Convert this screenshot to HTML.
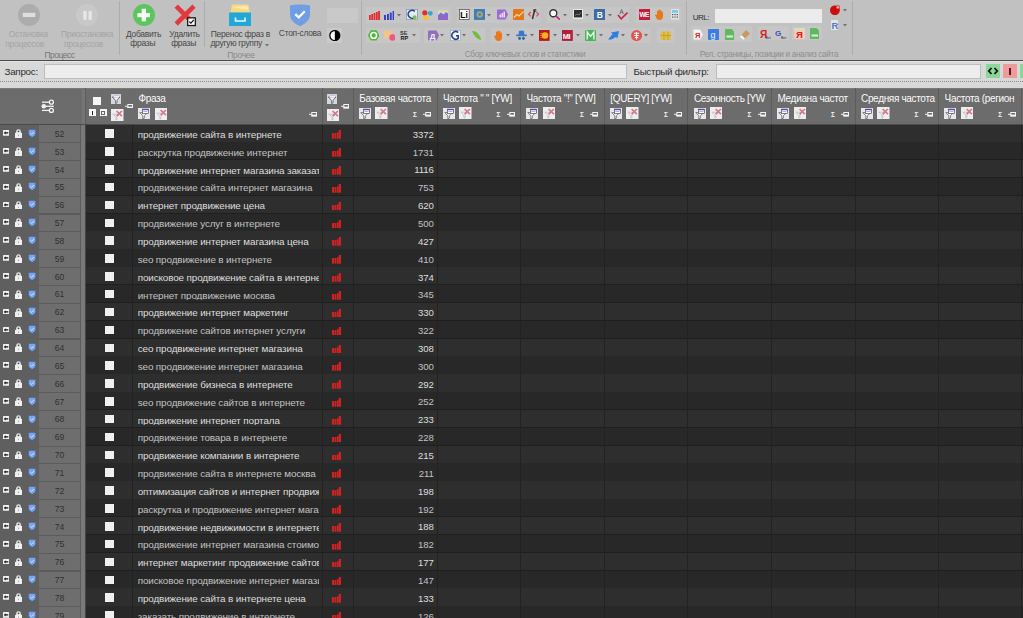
<!DOCTYPE html><html><head><meta charset="utf-8"><style>
*{margin:0;padding:0;box-sizing:border-box}
html,body{width:1023px;height:618px;overflow:hidden;background:#2a2a2a;font-family:"Liberation Sans",sans-serif}
.a{position:absolute}
.t{position:absolute;white-space:nowrap;line-height:1}
#rib{left:0;top:0;width:1023px;height:60px;background:#c1c1c1}
.rl{color:#3e3e3e;font-size:9px;letter-spacing:-0.6px}
.rd{color:#a3a3a3}
.gl{color:#8e8e8e;font-size:9px;letter-spacing:-0.5px}
.sep{position:absolute;width:1px;background:#adadad}
.grp{position:absolute;background:#c8c8c8}
.dd{position:absolute;width:0;height:0;border-left:2.5px solid transparent;border-right:2.5px solid transparent;border-top:3px solid #6a6a6a}
#qb{left:0;top:61px;width:1023px;height:27px;background:#d8d8d8}
.inp{position:absolute;background:#ededed;border:1px solid #bdbdbd}
.hdr{position:absolute;top:88px;height:36.3px;background:#6c6c6c}
.ht{color:#fafafa;font-size:10px;letter-spacing:-0.33px}
.row{position:absolute;left:85.5px;width:938px;height:17.8px}
.ph{font-size:9.9px;letter-spacing:-0.12px}
</style></head><body>
<div id="rib" class="a"></div>
<div class="a" style="left:0;top:59.5px;width:1023px;height:1.5px;background:#4b4b4b"></div>
<svg class="a" style="left:17.6px;top:4.2px" width="22" height="22" viewBox="0 0 22 22"><circle cx="11" cy="11" r="11" fill="#acacac"/><rect x="4.7" y="8.8" width="12.6" height="4.2" fill="#dedede"/></svg>
<svg class="a" style="left:75.5px;top:4.2px" width="22" height="22" viewBox="0 0 22 22"><circle cx="11" cy="11" r="11" fill="#c8c8c8"/><rect x="7.2" y="6.9" width="3.5" height="8.9" fill="#e6e6e6"/><rect x="12.5" y="6.9" width="3.3" height="8.9" fill="#e6e6e6"/></svg>
<div class="t" style="left:-21.60px;width:100px;text-align:center;top:30.20px;font-size:8.5px;color:#a4a4a4;letter-spacing:-0.3px">Остановка</div>
<div class="t" style="left:-25.40px;width:100px;text-align:center;top:39.50px;font-size:8.5px;color:#a4a4a4;letter-spacing:-0.3px">процессов</div>
<div class="t" style="left:37.10px;width:100px;text-align:center;top:30.20px;font-size:8.5px;color:#a4a4a4;letter-spacing:-0.3px">Приостановка</div>
<div class="t" style="left:33.30px;width:100px;text-align:center;top:39.50px;font-size:8.5px;color:#a4a4a4;letter-spacing:-0.3px">процессов</div>
<div class="t" style="left:9.50px;width:100px;text-align:center;top:51.10px;font-size:8.5px;color:#767676;letter-spacing:-0.5px">Процесс</div>
<div class="a" style="left:119px;top:1px;width:1.00px;height:54.00px;background:#adadad"></div>
<svg class="a" style="left:132.6px;top:4.3px" width="22" height="22" viewBox="0 0 22 22"><circle cx="11" cy="11" r="11" fill="#5cc55e"/><rect x="4.4" y="9.2" width="12.6" height="4" fill="#f4fff4"/><rect x="8.7" y="4.7" width="4.3" height="12.6" fill="#f4fff4"/></svg>
<svg class="a" style="left:173.5px;top:4px" width="22.5" height="22.5" viewBox="0 0 22.5 22.5"><path d="M2.2 2.2 L20 20 M20 2.2 L2.2 20" stroke="#e03a3e" stroke-width="4.6"/><rect x="13" y="13.2" width="9" height="9" fill="#1a1a1a"/><rect x="14.3" y="14.5" width="6.4" height="6.4" fill="#fafafa"/><path d="M15.2 17.6 L16.9 19.2 L19.8 15.8" fill="none" stroke="#111" stroke-width="1.2"/></svg>
<div class="t" style="left:93.50px;width:100px;text-align:center;top:30.40px;font-size:8.5px;color:#474747;letter-spacing:-0.3px">Добавить</div>
<div class="t" style="left:92.80px;width:100px;text-align:center;top:39.40px;font-size:8.5px;color:#474747;letter-spacing:-0.3px">фразы</div>
<div class="t" style="left:134.50px;width:100px;text-align:center;top:30.40px;font-size:8.5px;color:#474747;letter-spacing:-0.3px">Удалить</div>
<div class="t" style="left:133.60px;width:100px;text-align:center;top:39.40px;font-size:8.5px;color:#474747;letter-spacing:-0.3px">фразы</div>
<div class="a" style="left:204px;top:1px;width:1.00px;height:46.00px;background:#adadad"></div>
<svg class="a" style="left:229px;top:4px" width="22.4" height="22.2" viewBox="0 0 22.4 22.2"><path d="M3 0.5 H19.5 L21 8.5 H1.5 Z" fill="#f6d981"/><path d="M2.5 3 L18 2 L19.5 6 Z" fill="#fbe9b0"/><rect x="0" y="8.5" width="22.4" height="13.7" rx="1" fill="#22a8d8"/><path d="M6.5 13.5 V17 H16 V13.5" fill="none" stroke="#e8f8ff" stroke-width="1.6"/></svg>
<div class="t" style="left:190.30px;width:100px;text-align:center;top:29.80px;font-size:8.5px;color:#474747;letter-spacing:-0.3px">Перенос фраз в</div>
<div class="t" style="left:186.20px;width:100px;text-align:center;top:39.40px;font-size:8.5px;color:#474747;letter-spacing:-0.3px">другую группу</div>
<svg class="a" style="left:264.5px;top:43.5px" width="4" height="3" viewBox="0 0 4 3"><path d="M0 0 H4 L2 2.6 Z" fill="#6f6f6f"/></svg>
<svg class="a" style="left:290px;top:4px" width="20" height="22.3" viewBox="0 0 20 22.3"><path d="M0 1.5 Q10 -0.5 20 1.5 V11 Q20 17.5 10 22.3 Q0 17.5 0 11 Z" fill="#6f9ee5"/><path d="M5.3 10.2 L8.8 13.5 L14.7 7.3" fill="none" stroke="#fff" stroke-width="2.3"/></svg>
<div class="t" style="left:250.00px;width:100px;text-align:center;top:29.40px;font-size:8.5px;color:#474747;letter-spacing:-0.3px">Стоп-слова</div>
<div class="a" style="left:327px;top:7.5px;width:30.80px;height:15.10px;background:#c9c9c9"></div>
<div class="a" style="left:327px;top:28px;width:15.00px;height:14.60px;background:#cacaca"></div>
<svg class="a" style="left:329px;top:29.5px" width="11.6" height="11.2" viewBox="0 0 11.6 11.2"><circle cx="5.8" cy="5.6" r="5" fill="#fff" stroke="#000" stroke-width="1.3"/><path d="M5.8 0.6 A5 5 0 0 1 5.8 10.6 Z" fill="#000"/></svg>
<div class="t" style="left:191.00px;width:100px;text-align:center;top:50.50px;font-size:8.5px;color:#8a8a8a;letter-spacing:-0.3px">Прочее</div>
<div class="a" style="left:361px;top:1px;width:1.00px;height:54.00px;background:#adadad"></div>
<div class="a" style="left:366px;top:7.3px;width:84.50px;height:15.40px;background:#c6c6c6"></div>
<div class="a" style="left:456.5px;top:7.3px;width:83.90px;height:15.40px;background:#c6c6c6"></div>
<div class="a" style="left:546.7px;top:7.3px;width:82.60px;height:15.40px;background:#c6c6c6"></div>
<div class="a" style="left:635.7px;top:7.3px;width:45.70px;height:15.40px;background:#c6c6c6"></div>
<div class="a" style="left:366px;top:27.5px;width:54.00px;height:15.40px;background:#c6c6c6"></div>
<div class="a" style="left:424px;top:27.5px;width:60.50px;height:15.40px;background:#c6c6c6"></div>
<div class="a" style="left:490.8px;top:27.5px;width:160.20px;height:15.40px;background:#c6c6c6"></div>
<div class="a" style="left:657.3px;top:27.5px;width:17.70px;height:15.40px;background:#c6c6c6"></div>
<svg class="a" style="left:368.5px;top:11px" width="11" height="9" viewBox="0 0 11 9"><g fill="#e02e2e"><rect x="0" y="4" width="1.8" height="5"/><rect x="2.3" y="3" width="1.8" height="6"/><rect x="4.6" y="2" width="1.8" height="7"/><rect x="6.9" y="1" width="1.8" height="8"/><rect x="9.1" y="0" width="1.9" height="9"/></g></svg>
<svg class="a" style="left:383.9px;top:11px" width="10.5" height="9" viewBox="0 0 10.5 9"><g fill="#2f3fc8"><rect x="0" y="4" width="1.9" height="5"/><rect x="3" y="3" width="1.9" height="6"/><rect x="5.8" y="1.5" width="1.9" height="7.5"/><rect x="8.6" y="0" width="1.9" height="9"/></g></svg>
<svg class="a" style="left:397.3px;top:14px" width="4" height="3" viewBox="0 0 4 3"><path d="M0 0 H4 L2 2.6 Z" fill="#6f6f6f"/></svg>
<svg class="a" style="left:406px;top:8.9px" width="11.8" height="10.9" viewBox="0 0 11.8 10.9"><rect x="0.3" y="0.3" width="11.2" height="10.3" fill="#dfeef5" stroke="#6e8a8a" stroke-width="0.6"/><path d="M8.8 2.3 A4 4 0 1 0 8.8 8.3" fill="none" stroke="#2a3e9a" stroke-width="1.6"/><circle cx="8.6" cy="8.2" r="2" fill="#7cc24a"/></svg>
<svg class="a" style="left:422.3px;top:9.5px" width="11" height="10.5" viewBox="0 0 11 10.5"><circle cx="2.8" cy="2.8" r="2.6" fill="#e52a2a"/><circle cx="8.3" cy="3.3" r="2.4" fill="#2aa8e0"/><circle cx="4" cy="7.8" r="2.6" fill="#f6c230"/></svg>
<svg class="a" style="left:437.7px;top:9.7px" width="10.5" height="10.1" viewBox="0 0 10.5 10.1"><rect x="0" y="0" width="10.5" height="10.1" fill="#bfe0f0"/><path d="M0 5 L3 2.5 L5.5 4.5 L8 2 L10.5 4 V10.1 H0 Z" fill="#8a6ac8"/><rect x="0" y="0" width="10.5" height="1.5" fill="#e8d27a"/></svg>
<svg class="a" style="left:459px;top:8.9px" width="10.6" height="10.9" viewBox="0 0 10.6 10.9"><rect x="0.4" y="0.4" width="9.8" height="10.1" fill="#fff" stroke="#555" stroke-width="0.8"/><text x="1.3" y="8.8" font-family="Liberation Sans" font-weight="bold" font-size="8.5" fill="#000">Li</text></svg>
<svg class="a" style="left:474px;top:8.9px" width="11.4" height="10.9" viewBox="0 0 11.4 10.9"><rect width="11.4" height="10.9" fill="#3d7cc0"/><circle cx="5.7" cy="5.45" r="3.2" fill="#a8a860"/><circle cx="5.7" cy="5.45" r="1.2" fill="#3d7cc0"/></svg>
<svg class="a" style="left:487.4px;top:14px" width="4" height="3" viewBox="0 0 4 3"><path d="M0 0 H4 L2 2.6 Z" fill="#6f6f6f"/></svg>
<svg class="a" style="left:497px;top:8.9px" width="11" height="10.9" viewBox="0 0 11 10.9"><path d="M1 0.5 H8.5 L11 5.45 L8.5 10.4 H1 Q0 10.4 0 9.4 V1.5 Q0 0.5 1 0.5 Z" fill="#9b6cd6"/><g fill="#f0e8ff"><rect x="2.5" y="5.5" width="1.4" height="3"/><rect x="4.5" y="4" width="1.4" height="4.5"/><rect x="6.5" y="2.5" width="1.4" height="6"/></g></svg>
<svg class="a" style="left:512.5px;top:8.9px" width="11.4" height="10.9" viewBox="0 0 11.4 10.9"><rect width="11.4" height="10.9" rx="1" fill="#e4761a"/><path d="M1 8.5 L4 5.5 L6 7 L10.5 2.5" fill="none" stroke="#f8d8a8" stroke-width="1.1"/></svg>
<svg class="a" style="left:528px;top:9.2px" width="11.2" height="10.5" viewBox="0 0 11.2 10.5"><path d="M2.8 3 L0.6 5.2 L2.8 7.4 M8.4 3 L10.6 5.2 L8.4 7.4" fill="none" stroke="#d24a5a" stroke-width="1.1"/><path d="M6.8 0.5 L4.4 10" stroke="#333" stroke-width="1.5"/><circle cx="6.8" cy="1.3" r="1.2" fill="none" stroke="#333" stroke-width="0.9"/></svg>
<svg class="a" style="left:549px;top:8.9px" width="11.3" height="11" viewBox="0 0 11.3 11"><circle cx="4.3" cy="4.3" r="3.5" fill="#fff" stroke="#333" stroke-width="1.4"/><path d="M6.8 6.8 L10.8 10.6" stroke="#c8256a" stroke-width="1.6"/></svg>
<svg class="a" style="left:562.6px;top:14px" width="4" height="3" viewBox="0 0 4 3"><path d="M0 0 H4 L2 2.6 Z" fill="#6f6f6f"/></svg>
<svg class="a" style="left:573px;top:9.4px" width="10" height="10" viewBox="0 0 10 10"><rect x="0" y="0" width="10" height="10" rx="1" fill="#e6e6e6"/><rect x="1" y="1" width="8" height="7.4" fill="#2e2e2e"/><path d="M2 6.5 L4 5 L6 6 L8 3.5" fill="none" stroke="#aaa" stroke-width="0.6"/></svg>
<svg class="a" style="left:584.6px;top:14px" width="4" height="3" viewBox="0 0 4 3"><path d="M0 0 H4 L2 2.6 Z" fill="#6f6f6f"/></svg>
<svg class="a" style="left:594px;top:8.9px" width="11.2" height="11" viewBox="0 0 11.2 11"><rect width="11.2" height="11" rx="0.6" fill="#3e6ca2"/><text x="2.8" y="8.8" font-family="Liberation Sans" font-weight="bold" font-size="8.5" fill="#fff">B</text></svg>
<svg class="a" style="left:607.6px;top:14px" width="4" height="3" viewBox="0 0 4 3"><path d="M0 0 H4 L2 2.6 Z" fill="#6f6f6f"/></svg>
<svg class="a" style="left:617px;top:8.5px" width="11" height="11.5" viewBox="0 0 11 11.5"><path d="M1 6 L4.2 9.8 L10.5 3.5" fill="none" stroke="#c8234e" stroke-width="1.6"/><path d="M2.8 5 L4.6 0.5 L6.4 5 M3.5 3.4 H5.7" fill="none" stroke="#555" stroke-width="0.7"/></svg>
<svg class="a" style="left:638.6px;top:8.9px" width="11.2" height="11" viewBox="0 0 11.2 11"><rect width="11.2" height="11" fill="#c41f3a"/><text x="0.6" y="8.3" font-family="Liberation Sans" font-weight="bold" font-size="6.5" fill="#fff" letter-spacing="-0.6">WE</text></svg>
<svg class="a" style="left:654.5px;top:8.5px" width="10" height="11.5" viewBox="0 0 10 11.5"><path d="M2 5 V2 Q2.8 1 3.5 2 V5 V1 Q4.3 0 5 1 V5 V1.5 Q5.8 0.5 6.5 1.5 V5.5 V3 Q7.3 2 8 3 V7 Q8 11 4.5 11 Q1.5 11 1 8 L0 6 Q0.5 5 1.5 6 Z" fill="#e8781a"/></svg>
<svg class="a" style="left:671px;top:9px" width="8" height="10.5" viewBox="0 0 8 10.5"><rect width="8" height="10.5" fill="#dfe4ea"/><rect x="1" y="1" width="6" height="2.8" fill="#7fc8e8"/><g fill="#555"><rect x="1" y="5" width="1.3" height="1.2"/><rect x="3.4" y="5" width="1.3" height="1.2"/><rect x="5.7" y="5" width="1.3" height="1.2"/><rect x="1" y="7.5" width="1.3" height="1.2"/><rect x="3.4" y="7.5" width="1.3" height="1.2"/><rect x="5.7" y="7.5" width="1.3" height="1.2"/></g></svg>
<svg class="a" style="left:368px;top:30px" width="11.4" height="10.9" viewBox="0 0 11.4 10.9"><path d="M2.8 0.3 H8.6 L11.4 5.45 L8.6 10.6 H2.8 L0 5.45 Z" fill="#52b53a"/><circle cx="5.7" cy="5.45" r="2.9" fill="none" stroke="#f0fff0" stroke-width="1.5"/></svg>
<svg class="a" style="left:383.5px;top:30px" width="11.7" height="11" viewBox="0 0 11.7 11"><rect x="0" y="0.5" width="8" height="8" fill="#f0c58a"/><circle cx="8.5" cy="7.5" r="3.2" fill="#f2577c"/></svg>
<svg class="a" style="left:399.6px;top:30.2px" width="9.8" height="10.7" viewBox="0 0 9.8 10.7"><text x="0" y="4.8" font-family="Liberation Sans" font-weight="bold" font-size="5.5" fill="#333">SE</text><text x="0.5" y="10.3" font-family="Liberation Sans" font-weight="bold" font-size="5.5" fill="#111">RP</text></svg>
<svg class="a" style="left:412.2px;top:34px" width="4" height="3" viewBox="0 0 4 3"><path d="M0 0 H4 L2 2.6 Z" fill="#6f6f6f"/></svg>
<svg class="a" style="left:428px;top:30px" width="11" height="10.9" viewBox="0 0 11 10.9"><path d="M1 0.5 H8.5 L11 5.45 L8.5 10.4 H1 Q0 10.4 0 9.4 V1.5 Q0 0.5 1 0.5 Z" fill="#8e6fba"/><text x="1.8" y="8.8" font-family="Liberation Sans" font-weight="bold" font-size="8" fill="#f4f0ff">Д</text></svg>
<svg class="a" style="left:440.1px;top:34px" width="4" height="3" viewBox="0 0 4 3"><path d="M0 0 H4 L2 2.6 Z" fill="#6f6f6f"/></svg>
<svg class="a" style="left:450px;top:30px" width="10.7" height="10.9" viewBox="0 0 10.7 10.9"><rect x="0.3" y="0.3" width="10.1" height="10.3" fill="#f0f6fa" stroke="#8aa0b0" stroke-width="0.6"/><path d="M8.2 2.5 A3.8 3.8 0 1 0 8.2 8.3 V5.8 H6" fill="none" stroke="#2a3e8a" stroke-width="1.6"/></svg>
<svg class="a" style="left:462.0px;top:34px" width="4" height="3" viewBox="0 0 4 3"><path d="M0 0 H4 L2 2.6 Z" fill="#6f6f6f"/></svg>
<svg class="a" style="left:471.7px;top:30.3px" width="9.7" height="10.5" viewBox="0 0 9.7 10.5"><path d="M0 1 Q6 0 9.5 10 Q3 9 0 1 Z" fill="#6cc03a"/></svg>
<svg class="a" style="left:494px;top:30px" width="9.6" height="11" viewBox="0 0 9.6 11"><path d="M2 5 V2 Q2.8 1 3.5 2 V5 V1 Q4.3 0 5 1 V5 V1.5 Q5.8 0.5 6.5 1.5 V5.5 V3 Q7.3 2 8 3 V7 Q8 11 4.5 11 Q1.5 11 1 8 L0 6 Q0.5 5 1.5 6 Z" fill="#e8781a"/></svg>
<svg class="a" style="left:506.1px;top:34px" width="4" height="3" viewBox="0 0 4 3"><path d="M0 0 H4 L2 2.6 Z" fill="#6f6f6f"/></svg>
<svg class="a" style="left:516px;top:30.3px" width="11" height="10" viewBox="0 0 11 10"><path d="M2.5 5 L3 1 Q5.5 0 8 1 L8.5 5 Z" fill="#3a78c8"/><rect x="0" y="4.6" width="11" height="1.6" rx="0.8" fill="#3a78c8"/><circle cx="3.6" cy="8.4" r="1.4" fill="#2a5aa0"/><circle cx="7.4" cy="8.4" r="1.4" fill="#2a5aa0"/></svg>
<svg class="a" style="left:529.6px;top:34px" width="4" height="3" viewBox="0 0 4 3"><path d="M0 0 H4 L2 2.6 Z" fill="#6f6f6f"/></svg>
<svg class="a" style="left:539.2px;top:30px" width="10.6" height="10.9" viewBox="0 0 10.6 10.9"><rect width="10.6" height="10.9" fill="#b51c1c"/><circle cx="6" cy="5.45" r="3.3" fill="#ffb020"/><path d="M1 3.5 H3.5 M1 5.5 H3 M1.5 7.5 H3.5" stroke="#ff8a20" stroke-width="0.8"/></svg>
<svg class="a" style="left:552.6px;top:34px" width="4" height="3" viewBox="0 0 4 3"><path d="M0 0 H4 L2 2.6 Z" fill="#6f6f6f"/></svg>
<svg class="a" style="left:562px;top:30px" width="10.8" height="10.9" viewBox="0 0 10.8 10.9"><rect width="10.8" height="10.9" fill="#b21f3c"/><text x="0.8" y="8.6" font-family="Liberation Sans" font-weight="bold" font-size="7.5" fill="#fff" letter-spacing="-0.5">MI</text></svg>
<svg class="a" style="left:575.6px;top:34px" width="4" height="3" viewBox="0 0 4 3"><path d="M0 0 H4 L2 2.6 Z" fill="#6f6f6f"/></svg>
<svg class="a" style="left:584.7px;top:30px" width="11.1" height="11" viewBox="0 0 11.1 11"><rect width="11.1" height="11" rx="1" fill="#4db35a"/><path d="M2.2 9.5 V2 L5.55 6.5 L8.9 2 V9.5" fill="none" stroke="#f0fff0" stroke-width="1.3"/></svg>
<svg class="a" style="left:598.6px;top:34px" width="4" height="3" viewBox="0 0 4 3"><path d="M0 0 H4 L2 2.6 Z" fill="#6f6f6f"/></svg>
<svg class="a" style="left:608px;top:31px" width="11" height="9" viewBox="0 0 11 9"><path d="M0 8.5 L4.5 3 L3 1.5 L11 0 L9.5 7.5 L8 6 L3.5 8.5 Z" fill="#2f7fe0"/></svg>
<svg class="a" style="left:621.4px;top:34px" width="4" height="3" viewBox="0 0 4 3"><path d="M0 0 H4 L2 2.6 Z" fill="#6f6f6f"/></svg>
<svg class="a" style="left:631px;top:30px" width="11.1" height="11.1" viewBox="0 0 11.1 11.1"><circle cx="5.55" cy="5.55" r="5.5" fill="#e5534e"/><path d="M3 3.3 H8.1 M5.55 2 V9.5 M3.3 5.5 H7.8 M3.8 7.5 H7.3" stroke="#fff" stroke-width="1"/></svg>
<svg class="a" style="left:644.2px;top:34px" width="4" height="3" viewBox="0 0 4 3"><path d="M0 0 H4 L2 2.6 Z" fill="#6f6f6f"/></svg>
<svg class="a" style="left:659.7px;top:30.3px" width="11.8" height="10.5" viewBox="0 0 11.8 10.5"><rect x="0.5" y="1.5" width="11" height="8.5" rx="1.5" fill="#e0c04a"/><path d="M0.5 5.5 H11.5 M4 1.5 V10 M8 1.5 V10" stroke="#b8962a" stroke-width="0.7"/></svg>
<div class="t" style="left:425.00px;width:200px;text-align:center;top:50.56px;font-size:8.2px;color:#8e8e8e;letter-spacing:-0.3px">Сбор ключевых слов и статистики</div>
<div class="a" style="left:686px;top:1px;width:1.00px;height:54.00px;background:#adadad"></div>
<div class="t" style="left:692.70px;top:14.03px;font-size:8px;color:#2e2e2e;letter-spacing:-0.45px">URL:</div>
<div class="a" style="left:715px;top:8.8px;width:106.7px;height:14.2px;background:#ebebeb"></div>
<div class="a" style="left:691px;top:26.3px;width:61.00px;height:15.40px;background:#c6c6c6"></div>
<div class="a" style="left:757.5px;top:25.6px;width:31.00px;height:14.90px;background:#c6c6c6"></div>
<div class="a" style="left:792px;top:25.6px;width:30.00px;height:14.90px;background:#c6c6c6"></div>
<svg class="a" style="left:693px;top:28.7px" width="10.2" height="10.9" viewBox="0 0 10.2 10.9"><path d="M0.5 0.5 H7 L10 5.45 L7 10.4 H0.5 Z" fill="#f6f6f6" stroke="#d8d8d8" stroke-width="0.5"/><text x="2" y="8.6" font-family="Liberation Sans" font-weight="bold" font-size="7.5" fill="#d42020">Я</text></svg>
<svg class="a" style="left:708px;top:28.5px" width="11.4" height="11" viewBox="0 0 11.4 11"><rect width="11.4" height="11" rx="1" fill="#3c7ee0"/><text x="2.6" y="8.8" font-family="Liberation Sans" font-size="9" fill="#eaf2ff">g</text></svg>
<svg class="a" style="left:724.6px;top:28.7px" width="9.4" height="10.9" viewBox="0 0 9.4 10.9"><path d="M0 0 H6.5 L9.4 3 V10.9 H0 Z" fill="#60b860"/><rect x="1.5" y="6.5" width="6.5" height="2" fill="#d8f0d8"/></svg>
<svg class="a" style="left:738.8px;top:28.5px" width="11.2" height="11" viewBox="0 0 11.2 11"><path d="M0.5 8 L7 1 L11 4.5 L4.5 11 Z" fill="#c89a60"/><path d="M0.5 8 L2.5 6 L6 9.5 L4.5 11 Z" fill="#f4f4f4"/></svg>
<svg class="a" style="left:760px;top:28px" width="11" height="11" viewBox="0 0 11 11"><text x="0" y="9.5" font-family="Liberation Sans" font-weight="bold" font-size="10" fill="#d42020">Я</text><text x="5.5" y="10.5" font-family="Liberation Sans" font-size="3.5" fill="#333">Bet</text></svg>
<svg class="a" style="left:775px;top:28px" width="12" height="11" viewBox="0 0 12 11"><text x="0" y="8" font-family="Liberation Sans" font-weight="bold" font-size="8" fill="#3a50c0">G</text><text x="6" y="10.5" font-family="Liberation Sans" font-size="3.5" fill="#333">Bet</text></svg>
<svg class="a" style="left:793.6px;top:27.5px" width="11.4" height="11.4" viewBox="0 0 11.4 11.4"><rect width="11.4" height="11.4" fill="#f8c8b8"/><rect x="0" y="0" width="11.4" height="2" fill="#c8e8b8"/><text x="2" y="9.6" font-family="Liberation Sans" font-weight="bold" font-size="9.5" fill="#d42020">Я</text></svg>
<svg class="a" style="left:810px;top:27.8px" width="9.4" height="11" viewBox="0 0 9.4 11"><path d="M0 0 H6.5 L9.4 3 V11 H0 Z" fill="#60b860"/><rect x="1.5" y="6.5" width="6.5" height="2" fill="#d8f0d8"/></svg>
<svg class="a" style="left:829.7px;top:4.5px" width="10.2" height="10.2" viewBox="0 0 10.2 10.2"><circle cx="4.9" cy="5.3" r="4.9" fill="#c80e0e"/><circle cx="7.9" cy="2.3" r="1.8" fill="#f0a0a0" stroke="#c80e0e" stroke-width="0.6"/></svg>
<svg class="a" style="left:843px;top:9px" width="4" height="3" viewBox="0 0 4 3"><path d="M0 0 H4 L2 2.6 Z" fill="#6f6f6f"/></svg>
<svg class="a" style="left:830.7px;top:19.6px" width="7.2" height="10" viewBox="0 0 7.2 10"><rect x="0" y="0" width="7.2" height="10" fill="#dfe6f2"/><text x="0.4" y="9" font-family="Liberation Sans" font-weight="bold" font-size="9.5" fill="#5a7ab8">R</text></svg>
<svg class="a" style="left:843px;top:24.2px" width="4" height="3" viewBox="0 0 4 3"><path d="M0 0 H4 L2 2.6 Z" fill="#6f6f6f"/></svg>
<div class="t" style="left:669.00px;width:200px;text-align:center;top:50.76px;font-size:8.2px;color:#8e8e8e;letter-spacing:-0.33px">Рел. страницы, позиции и анализ сайта</div>
<div class="a" style="left:851.5px;top:1px;width:1.00px;height:54.00px;background:#adadad"></div>
<div id="qb" class="a"></div>
<div class="a" style="left:0;top:61px;width:1023px;height:1px;background:#e4e4e4"></div>
<div class="t" style="left:4.5px;top:67.2px;font-size:9.8px;color:#2e2e2e;letter-spacing:-0.25px">Запрос:</div>
<div class="inp" style="left:44px;top:64px;width:582.5px;height:14.6px"></div>
<div class="t" style="left:633.5px;top:67.2px;font-size:9.8px;color:#2e2e2e;letter-spacing:-0.3px">Быстрый фильтр:</div>
<div class="inp" style="left:716px;top:64px;width:264.5px;height:14.6px"></div>
<div class="a" style="left:986px;top:64px;width:14px;height:14px;background:#8cd69c"></div>
<svg class="a" style="left:986px;top:64px" width="14" height="14" viewBox="0 0 14 14"><path d="M5.5 4 L2.8 7 L5.5 10 M8.5 4 L11.2 7 L8.5 10" fill="none" stroke="#0a1a0a" stroke-width="1.8"/></svg>
<div class="a" style="left:1003px;top:64px;width:14px;height:14px;background:#eb9d9d"></div>
<div class="a" style="left:1009.4px;top:68px;width:1.5px;height:4.7px;background:#6a1515"></div><div class="a" style="left:1009.4px;top:73.3px;width:1.5px;height:1.4px;background:#6a1515"></div>
<div class="a" style="left:1019.5px;top:64px;width:4px;height:14px;background:#8cd69c"></div>
<div class="a" style="left:0;top:81px;width:1023px;height:1px;background-image:linear-gradient(90deg,#8a8a8a 50%,transparent 50%);background-size:2px 1px"></div>
<div class="hdr" style="left:0;width:1023px"></div>
<div class="a" style="left:0;top:88px;width:1023px;height:1px;background:#7a7a7a"></div>
<div class="a" style="left:85.20px;top:88px;width:1px;height:36.3px;background:#5c5c5c"></div>
<div class="a" style="left:321.80px;top:88px;width:1px;height:36.3px;background:#5c5c5c"></div>
<div class="a" style="left:352.80px;top:88px;width:1px;height:36.3px;background:#5c5c5c"></div>
<div class="a" style="left:436.50px;top:88px;width:1px;height:36.3px;background:#5c5c5c"></div>
<div class="a" style="left:520.00px;top:88px;width:1px;height:36.3px;background:#5c5c5c"></div>
<div class="a" style="left:603.80px;top:88px;width:1px;height:36.3px;background:#5c5c5c"></div>
<div class="a" style="left:687.40px;top:88px;width:1px;height:36.3px;background:#5c5c5c"></div>
<div class="a" style="left:771.00px;top:88px;width:1px;height:36.3px;background:#5c5c5c"></div>
<div class="a" style="left:854.50px;top:88px;width:1px;height:36.3px;background:#5c5c5c"></div>
<div class="a" style="left:938.10px;top:88px;width:1px;height:36.3px;background:#5c5c5c"></div>
<div class="a" style="left:1021.30px;top:88px;width:1px;height:36.3px;background:#5c5c5c"></div>
<div class="a" style="left:82.4px;top:88px;width:2.7px;height:36px;background:#767676"></div>
<svg class="a" style="left:41px;top:99px" width="14" height="15" viewBox="0 0 14 15"><g stroke="#f2f2f2" stroke-width="1.3" fill="none"><path d="M1 3.2 H8.4"/><circle cx="10.4" cy="3.2" r="2"/><path d="M4.8 7.3 H12.8"/><path d="M1 11.4 H8.4"/><circle cx="10.4" cy="11.4" r="2"/></g><circle cx="2.8" cy="7.3" r="2.3" fill="#f2f2f2"/></svg>
<div class="a" style="left:93.2px;top:97.2px;width:7.8px;height:7.8px;background:#f4f4f4"></div>
<div class="a" style="left:89.1px;top:109.2px;width:7px;height:7.2px;background:#f4f4f4"></div><div class="a" style="left:92px;top:111px;width:1.3px;height:3.8px;background:#222"></div>
<div class="a" style="left:99.5px;top:109.2px;width:7.2px;height:7.2px;background:#f4f4f4"></div><div class="a" style="left:101.3px;top:110.9px;width:3.6px;height:3.8px;border:0.7px solid #666"></div>
<svg class="a" style="left:111.1px;top:93.9px" width="10.2" height="10" viewBox="0 0 10.2 10"><rect x="0" y="0" width="10.2" height="10" fill="#d6d6dc"/><path d="M1.3 3 L9 3 L6 6.2 L6 9 L4.5 9.4 L4.5 6.2 Z" fill="#f2f2f6" stroke="#4a4a4a" stroke-width="0.7"/><ellipse cx="5.6" cy="2.6" rx="3" ry="1.2" fill="#ecebff"/><rect x="3.2" y="0.8" width="5" height="0.8" fill="#b8b0e0"/></svg>
<svg class="a" style="left:111.1px;top:108.6px" width="12.5" height="12" viewBox="0 0 12.5 12"><rect x="0" y="0" width="12.5" height="12" fill="#efedef"/><path d="M1.8 5.2 L8.4 5.2 L5.9 8.2 L5.9 10.8 L4.9 11 L4.9 8.2 Z" fill="none" stroke="#b8b8b8" stroke-width="0.7"/><path d="M5.6 2 L10.9 7.2 M10.9 2 L5.6 7.2" stroke="#d27888" stroke-width="1.7"/></svg>
<svg class="a" style="left:124.5px;top:103.6px" width="8" height="4.6" viewBox="0 0 8 4.6"><path d="M0 2.3 L2.5 2.3" stroke="#f4f4f4" stroke-width="1"/><rect x="2.8" y="0.5" width="4.7" height="3.6" fill="none" stroke="#f4f4f4" stroke-width="1"/><rect x="2.5" y="2.6" width="5" height="1.6" fill="#f4f4f4"/></svg>
<div class="t ht" style="left:138.4px;top:93.9px">Фраза</div>
<svg class="a" style="left:138.4px;top:107.7px" width="12" height="11.5" viewBox="0 0 12 11.5"><rect x="0" y="0" width="12" height="11.5" fill="#e7e7eb"/><path d="M1.8 4.6 L9.6 4.6 L6.3 7.8 L6.3 10.3 L4.8 10.9 L4.8 7.8 Z" fill="#f6f6f6" stroke="#505050" stroke-width="0.7"/><rect x="4.3" y="1.2" width="6.3" height="4.4" fill="#fbfbfb" stroke="#2a2a4a" stroke-width="0.6"/><rect x="4.3" y="0.9" width="6.3" height="1.3" fill="#5a48b8"/><rect x="5.3" y="3" width="4.2" height="0.7" fill="#9a9a9a"/></svg>
<svg class="a" style="left:154.8px;top:107.5px" width="12.5" height="12" viewBox="0 0 12.5 12"><rect x="0" y="0" width="12.5" height="12" fill="#efedef"/><path d="M1.8 5.2 L8.4 5.2 L5.9 8.2 L5.9 10.8 L4.9 11 L4.9 8.2 Z" fill="none" stroke="#b8b8b8" stroke-width="0.7"/><path d="M5.6 2 L10.9 7.2 M10.9 2 L5.6 7.2" stroke="#d27888" stroke-width="1.7"/></svg>
<svg class="a" style="left:309px;top:112.3px" width="8" height="4.6" viewBox="0 0 8 4.6"><path d="M0 2.3 L2.5 2.3" stroke="#f4f4f4" stroke-width="1"/><rect x="2.8" y="0.5" width="4.7" height="3.6" fill="none" stroke="#f4f4f4" stroke-width="1"/><rect x="2.5" y="2.6" width="5" height="1.6" fill="#f4f4f4"/></svg>
<svg class="a" style="left:327px;top:93.9px" width="10.2" height="10" viewBox="0 0 10.2 10"><rect x="0" y="0" width="10.2" height="10" fill="#d6d6dc"/><path d="M1.3 3 L9 3 L6 6.2 L6 9 L4.5 9.4 L4.5 6.2 Z" fill="#f2f2f6" stroke="#4a4a4a" stroke-width="0.7"/><ellipse cx="5.6" cy="2.6" rx="3" ry="1.2" fill="#ecebff"/><rect x="3.2" y="0.8" width="5" height="0.8" fill="#b8b0e0"/></svg>
<svg class="a" style="left:326.8px;top:108.6px" width="12.5" height="12" viewBox="0 0 12.5 12"><rect x="0" y="0" width="12.5" height="12" fill="#efedef"/><path d="M1.8 5.2 L8.4 5.2 L5.9 8.2 L5.9 10.8 L4.9 11 L4.9 8.2 Z" fill="none" stroke="#b8b8b8" stroke-width="0.7"/><path d="M5.6 2 L10.9 7.2 M10.9 2 L5.6 7.2" stroke="#d27888" stroke-width="1.7"/></svg>
<svg class="a" style="left:340.5px;top:104px" width="8" height="4.6" viewBox="0 0 8 4.6"><path d="M0 2.3 L2.5 2.3" stroke="#f4f4f4" stroke-width="1"/><rect x="2.8" y="0.5" width="4.7" height="3.6" fill="none" stroke="#f4f4f4" stroke-width="1"/><rect x="2.5" y="2.6" width="5" height="1.6" fill="#f4f4f4"/></svg>
<div class="t ht" style="left:359.30px;top:93.9px;width:75px;overflow:hidden">Базовая частота</div>
<svg class="a" style="left:359.1px;top:107.7px" width="12" height="11.5" viewBox="0 0 12 11.5"><rect x="0" y="0" width="12" height="11.5" fill="#e7e7eb"/><path d="M1.8 4.6 L9.6 4.6 L6.3 7.8 L6.3 10.3 L4.8 10.9 L4.8 7.8 Z" fill="#f6f6f6" stroke="#505050" stroke-width="0.7"/><rect x="4.3" y="1.2" width="6.3" height="4.4" fill="#fbfbfb" stroke="#2a2a4a" stroke-width="0.6"/><rect x="4.3" y="0.9" width="6.3" height="1.3" fill="#5a48b8"/><rect x="5.3" y="3" width="4.2" height="0.7" fill="#9a9a9a"/></svg>
<svg class="a" style="left:375.3px;top:107.4px" width="12.5" height="12" viewBox="0 0 12.5 12"><rect x="0" y="0" width="12.5" height="12" fill="#efedef"/><path d="M1.8 5.2 L8.4 5.2 L5.9 8.2 L5.9 10.8 L4.9 11 L4.9 8.2 Z" fill="none" stroke="#b8b8b8" stroke-width="0.7"/><path d="M5.6 2 L10.9 7.2 M10.9 2 L5.6 7.2" stroke="#d27888" stroke-width="1.7"/></svg>
<div class="t" style="left:412.9px;top:111.8px;font-size:6.5px;font-weight:bold;color:#f4f4f4">Σ</div>
<svg class="a" style="left:423.1px;top:112.2px" width="8" height="4.6" viewBox="0 0 8 4.6"><path d="M0 2.3 L2.5 2.3" stroke="#f4f4f4" stroke-width="1"/><rect x="2.8" y="0.5" width="4.7" height="3.6" fill="none" stroke="#f4f4f4" stroke-width="1"/><rect x="2.5" y="2.6" width="5" height="1.6" fill="#f4f4f4"/></svg>
<div class="t ht" style="left:443.00px;top:93.9px;width:75px;overflow:hidden">Частота " " [YW]</div>
<svg class="a" style="left:442.8px;top:107.7px" width="12" height="11.5" viewBox="0 0 12 11.5"><rect x="0" y="0" width="12" height="11.5" fill="#e7e7eb"/><path d="M1.8 4.6 L9.6 4.6 L6.3 7.8 L6.3 10.3 L4.8 10.9 L4.8 7.8 Z" fill="#f6f6f6" stroke="#505050" stroke-width="0.7"/><rect x="4.3" y="1.2" width="6.3" height="4.4" fill="#fbfbfb" stroke="#2a2a4a" stroke-width="0.6"/><rect x="4.3" y="0.9" width="6.3" height="1.3" fill="#5a48b8"/><rect x="5.3" y="3" width="4.2" height="0.7" fill="#9a9a9a"/></svg>
<svg class="a" style="left:459px;top:107.4px" width="12.5" height="12" viewBox="0 0 12.5 12"><rect x="0" y="0" width="12.5" height="12" fill="#efedef"/><path d="M1.8 5.2 L8.4 5.2 L5.9 8.2 L5.9 10.8 L4.9 11 L4.9 8.2 Z" fill="none" stroke="#b8b8b8" stroke-width="0.7"/><path d="M5.6 2 L10.9 7.2 M10.9 2 L5.6 7.2" stroke="#d27888" stroke-width="1.7"/></svg>
<div class="t" style="left:496.6px;top:111.8px;font-size:6.5px;font-weight:bold;color:#f4f4f4">Σ</div>
<svg class="a" style="left:506.8px;top:112.2px" width="8" height="4.6" viewBox="0 0 8 4.6"><path d="M0 2.3 L2.5 2.3" stroke="#f4f4f4" stroke-width="1"/><rect x="2.8" y="0.5" width="4.7" height="3.6" fill="none" stroke="#f4f4f4" stroke-width="1"/><rect x="2.5" y="2.6" width="5" height="1.6" fill="#f4f4f4"/></svg>
<div class="t ht" style="left:526.50px;top:93.9px;width:75px;overflow:hidden">Частота "!" [YW]</div>
<svg class="a" style="left:526.3px;top:107.7px" width="12" height="11.5" viewBox="0 0 12 11.5"><rect x="0" y="0" width="12" height="11.5" fill="#e7e7eb"/><path d="M1.8 4.6 L9.6 4.6 L6.3 7.8 L6.3 10.3 L4.8 10.9 L4.8 7.8 Z" fill="#f6f6f6" stroke="#505050" stroke-width="0.7"/><rect x="4.3" y="1.2" width="6.3" height="4.4" fill="#fbfbfb" stroke="#2a2a4a" stroke-width="0.6"/><rect x="4.3" y="0.9" width="6.3" height="1.3" fill="#5a48b8"/><rect x="5.3" y="3" width="4.2" height="0.7" fill="#9a9a9a"/></svg>
<svg class="a" style="left:542.5px;top:107.4px" width="12.5" height="12" viewBox="0 0 12.5 12"><rect x="0" y="0" width="12.5" height="12" fill="#efedef"/><path d="M1.8 5.2 L8.4 5.2 L5.9 8.2 L5.9 10.8 L4.9 11 L4.9 8.2 Z" fill="none" stroke="#b8b8b8" stroke-width="0.7"/><path d="M5.6 2 L10.9 7.2 M10.9 2 L5.6 7.2" stroke="#d27888" stroke-width="1.7"/></svg>
<div class="t" style="left:580.1px;top:111.8px;font-size:6.5px;font-weight:bold;color:#f4f4f4">Σ</div>
<svg class="a" style="left:590.3px;top:112.2px" width="8" height="4.6" viewBox="0 0 8 4.6"><path d="M0 2.3 L2.5 2.3" stroke="#f4f4f4" stroke-width="1"/><rect x="2.8" y="0.5" width="4.7" height="3.6" fill="none" stroke="#f4f4f4" stroke-width="1"/><rect x="2.5" y="2.6" width="5" height="1.6" fill="#f4f4f4"/></svg>
<div class="t ht" style="left:610.30px;top:93.9px;width:75px;overflow:hidden">[QUERY] [YW]</div>
<svg class="a" style="left:610.1px;top:107.7px" width="12" height="11.5" viewBox="0 0 12 11.5"><rect x="0" y="0" width="12" height="11.5" fill="#e7e7eb"/><path d="M1.8 4.6 L9.6 4.6 L6.3 7.8 L6.3 10.3 L4.8 10.9 L4.8 7.8 Z" fill="#f6f6f6" stroke="#505050" stroke-width="0.7"/><rect x="4.3" y="1.2" width="6.3" height="4.4" fill="#fbfbfb" stroke="#2a2a4a" stroke-width="0.6"/><rect x="4.3" y="0.9" width="6.3" height="1.3" fill="#5a48b8"/><rect x="5.3" y="3" width="4.2" height="0.7" fill="#9a9a9a"/></svg>
<svg class="a" style="left:626.3px;top:107.4px" width="12.5" height="12" viewBox="0 0 12.5 12"><rect x="0" y="0" width="12.5" height="12" fill="#efedef"/><path d="M1.8 5.2 L8.4 5.2 L5.9 8.2 L5.9 10.8 L4.9 11 L4.9 8.2 Z" fill="none" stroke="#b8b8b8" stroke-width="0.7"/><path d="M5.6 2 L10.9 7.2 M10.9 2 L5.6 7.2" stroke="#d27888" stroke-width="1.7"/></svg>
<div class="t" style="left:663.9px;top:111.8px;font-size:6.5px;font-weight:bold;color:#f4f4f4">Σ</div>
<svg class="a" style="left:674.1px;top:112.2px" width="8" height="4.6" viewBox="0 0 8 4.6"><path d="M0 2.3 L2.5 2.3" stroke="#f4f4f4" stroke-width="1"/><rect x="2.8" y="0.5" width="4.7" height="3.6" fill="none" stroke="#f4f4f4" stroke-width="1"/><rect x="2.5" y="2.6" width="5" height="1.6" fill="#f4f4f4"/></svg>
<div class="t ht" style="left:693.90px;top:93.9px;width:75px;overflow:hidden">Сезонность [YW</div>
<svg class="a" style="left:693.7px;top:107.7px" width="12" height="11.5" viewBox="0 0 12 11.5"><rect x="0" y="0" width="12" height="11.5" fill="#e7e7eb"/><path d="M1.8 4.6 L9.6 4.6 L6.3 7.8 L6.3 10.3 L4.8 10.9 L4.8 7.8 Z" fill="#f6f6f6" stroke="#505050" stroke-width="0.7"/><rect x="4.3" y="1.2" width="6.3" height="4.4" fill="#fbfbfb" stroke="#2a2a4a" stroke-width="0.6"/><rect x="4.3" y="0.9" width="6.3" height="1.3" fill="#5a48b8"/><rect x="5.3" y="3" width="4.2" height="0.7" fill="#9a9a9a"/></svg>
<svg class="a" style="left:709.9px;top:107.4px" width="12.5" height="12" viewBox="0 0 12.5 12"><rect x="0" y="0" width="12.5" height="12" fill="#efedef"/><path d="M1.8 5.2 L8.4 5.2 L5.9 8.2 L5.9 10.8 L4.9 11 L4.9 8.2 Z" fill="none" stroke="#b8b8b8" stroke-width="0.7"/><path d="M5.6 2 L10.9 7.2 M10.9 2 L5.6 7.2" stroke="#d27888" stroke-width="1.7"/></svg>
<div class="t" style="left:747.5px;top:111.8px;font-size:6.5px;font-weight:bold;color:#f4f4f4">Σ</div>
<svg class="a" style="left:757.7px;top:112.2px" width="8" height="4.6" viewBox="0 0 8 4.6"><path d="M0 2.3 L2.5 2.3" stroke="#f4f4f4" stroke-width="1"/><rect x="2.8" y="0.5" width="4.7" height="3.6" fill="none" stroke="#f4f4f4" stroke-width="1"/><rect x="2.5" y="2.6" width="5" height="1.6" fill="#f4f4f4"/></svg>
<div class="t ht" style="left:777.50px;top:93.9px;width:75px;overflow:hidden">Медиана частот</div>
<svg class="a" style="left:777.3px;top:107.7px" width="12" height="11.5" viewBox="0 0 12 11.5"><rect x="0" y="0" width="12" height="11.5" fill="#e7e7eb"/><path d="M1.8 4.6 L9.6 4.6 L6.3 7.8 L6.3 10.3 L4.8 10.9 L4.8 7.8 Z" fill="#f6f6f6" stroke="#505050" stroke-width="0.7"/><rect x="4.3" y="1.2" width="6.3" height="4.4" fill="#fbfbfb" stroke="#2a2a4a" stroke-width="0.6"/><rect x="4.3" y="0.9" width="6.3" height="1.3" fill="#5a48b8"/><rect x="5.3" y="3" width="4.2" height="0.7" fill="#9a9a9a"/></svg>
<svg class="a" style="left:793.5px;top:107.4px" width="12.5" height="12" viewBox="0 0 12.5 12"><rect x="0" y="0" width="12.5" height="12" fill="#efedef"/><path d="M1.8 5.2 L8.4 5.2 L5.9 8.2 L5.9 10.8 L4.9 11 L4.9 8.2 Z" fill="none" stroke="#b8b8b8" stroke-width="0.7"/><path d="M5.6 2 L10.9 7.2 M10.9 2 L5.6 7.2" stroke="#d27888" stroke-width="1.7"/></svg>
<div class="t" style="left:831.1px;top:111.8px;font-size:6.5px;font-weight:bold;color:#f4f4f4">Σ</div>
<svg class="a" style="left:841.3px;top:112.2px" width="8" height="4.6" viewBox="0 0 8 4.6"><path d="M0 2.3 L2.5 2.3" stroke="#f4f4f4" stroke-width="1"/><rect x="2.8" y="0.5" width="4.7" height="3.6" fill="none" stroke="#f4f4f4" stroke-width="1"/><rect x="2.5" y="2.6" width="5" height="1.6" fill="#f4f4f4"/></svg>
<div class="t ht" style="left:861.00px;top:93.9px;width:75px;overflow:hidden">Средняя частота</div>
<svg class="a" style="left:860.8px;top:107.7px" width="12" height="11.5" viewBox="0 0 12 11.5"><rect x="0" y="0" width="12" height="11.5" fill="#e7e7eb"/><path d="M1.8 4.6 L9.6 4.6 L6.3 7.8 L6.3 10.3 L4.8 10.9 L4.8 7.8 Z" fill="#f6f6f6" stroke="#505050" stroke-width="0.7"/><rect x="4.3" y="1.2" width="6.3" height="4.4" fill="#fbfbfb" stroke="#2a2a4a" stroke-width="0.6"/><rect x="4.3" y="0.9" width="6.3" height="1.3" fill="#5a48b8"/><rect x="5.3" y="3" width="4.2" height="0.7" fill="#9a9a9a"/></svg>
<svg class="a" style="left:877px;top:107.4px" width="12.5" height="12" viewBox="0 0 12.5 12"><rect x="0" y="0" width="12.5" height="12" fill="#efedef"/><path d="M1.8 5.2 L8.4 5.2 L5.9 8.2 L5.9 10.8 L4.9 11 L4.9 8.2 Z" fill="none" stroke="#b8b8b8" stroke-width="0.7"/><path d="M5.6 2 L10.9 7.2 M10.9 2 L5.6 7.2" stroke="#d27888" stroke-width="1.7"/></svg>
<div class="t" style="left:914.6px;top:111.8px;font-size:6.5px;font-weight:bold;color:#f4f4f4">Σ</div>
<svg class="a" style="left:924.8px;top:112.2px" width="8" height="4.6" viewBox="0 0 8 4.6"><path d="M0 2.3 L2.5 2.3" stroke="#f4f4f4" stroke-width="1"/><rect x="2.8" y="0.5" width="4.7" height="3.6" fill="none" stroke="#f4f4f4" stroke-width="1"/><rect x="2.5" y="2.6" width="5" height="1.6" fill="#f4f4f4"/></svg>
<div class="t ht" style="left:944.60px;top:93.9px;width:75px;overflow:hidden">Частота (регион</div>
<svg class="a" style="left:944.4px;top:107.7px" width="12" height="11.5" viewBox="0 0 12 11.5"><rect x="0" y="0" width="12" height="11.5" fill="#e7e7eb"/><path d="M1.8 4.6 L9.6 4.6 L6.3 7.8 L6.3 10.3 L4.8 10.9 L4.8 7.8 Z" fill="#f6f6f6" stroke="#505050" stroke-width="0.7"/><rect x="4.3" y="1.2" width="6.3" height="4.4" fill="#fbfbfb" stroke="#2a2a4a" stroke-width="0.6"/><rect x="4.3" y="0.9" width="6.3" height="1.3" fill="#5a48b8"/><rect x="5.3" y="3" width="4.2" height="0.7" fill="#9a9a9a"/></svg>
<svg class="a" style="left:960.6px;top:107.4px" width="12.5" height="12" viewBox="0 0 12.5 12"><rect x="0" y="0" width="12.5" height="12" fill="#efedef"/><path d="M1.8 5.2 L8.4 5.2 L5.9 8.2 L5.9 10.8 L4.9 11 L4.9 8.2 Z" fill="none" stroke="#b8b8b8" stroke-width="0.7"/><path d="M5.6 2 L10.9 7.2 M10.9 2 L5.6 7.2" stroke="#d27888" stroke-width="1.7"/></svg>
<div class="t" style="left:998.2px;top:111.8px;font-size:6.5px;font-weight:bold;color:#f4f4f4">Σ</div>
<svg class="a" style="left:1008.4px;top:112.2px" width="8" height="4.6" viewBox="0 0 8 4.6"><path d="M0 2.3 L2.5 2.3" stroke="#f4f4f4" stroke-width="1"/><rect x="2.8" y="0.5" width="4.7" height="3.6" fill="none" stroke="#f4f4f4" stroke-width="1"/><rect x="2.5" y="2.6" width="5" height="1.6" fill="#f4f4f4"/></svg>
<div class="row" style="top:124.30px;background:#2e2e2e"></div>
<div class="a" style="left:85.5px;top:141.60px;width:938px;height:0.8px;background:#1f1f1f"></div>
<div class="t ph" style="left:137.7px;top:129.90px;color:#dedede;width:181px;overflow:hidden">продвижение сайта в интернете</div>
<div class="t" style="left:353px;width:80.8px;text-align:right;top:129.70px;color:#dedede;font-size:9.6px;letter-spacing:-0.1px">3372</div>
<div class="a" style="left:105.3px;top:129.30px;width:8.5px;height:8.5px;background:#f0f0f0"></div>
<svg class="a" style="left:331.9px;top:130.30px" width="9.2" height="8.7" viewBox="0 0 9.2 8.7"><g fill="#cf2323"><rect x="0" y="3" width="2" height="5.7"/><rect x="2.5" y="3" width="2" height="5.7"/><rect x="5" y="2.2" width="1.7" height="6.5"/><rect x="6.7" y="0" width="2.5" height="8.7"/></g></svg>
<div class="row" style="top:142.15px;background:#282828"></div>
<div class="a" style="left:85.5px;top:159.45px;width:938px;height:0.8px;background:#1f1f1f"></div>
<div class="t ph" style="left:137.7px;top:147.75px;color:#c2c2c2;width:181px;overflow:hidden">раскрутка продвижение интернет</div>
<div class="t" style="left:353px;width:80.8px;text-align:right;top:147.55px;color:#c2c2c2;font-size:9.6px;letter-spacing:-0.1px">1731</div>
<div class="a" style="left:105.3px;top:147.15px;width:8.5px;height:8.5px;background:#f0f0f0"></div>
<svg class="a" style="left:331.9px;top:148.15px" width="9.2" height="8.7" viewBox="0 0 9.2 8.7"><g fill="#cf2323"><rect x="0" y="3" width="2" height="5.7"/><rect x="2.5" y="3" width="2" height="5.7"/><rect x="5" y="2.2" width="1.7" height="6.5"/><rect x="6.7" y="0" width="2.5" height="8.7"/></g></svg>
<div class="row" style="top:160.00px;background:#2e2e2e"></div>
<div class="a" style="left:85.5px;top:177.30px;width:938px;height:0.8px;background:#1f1f1f"></div>
<div class="t ph" style="left:137.7px;top:165.60px;color:#dedede;width:181px;overflow:hidden">продвижение интернет магазина заказать</div>
<div class="t" style="left:353px;width:80.8px;text-align:right;top:165.40px;color:#dedede;font-size:9.6px;letter-spacing:-0.1px">1116</div>
<div class="a" style="left:105.3px;top:165.00px;width:8.5px;height:8.5px;background:#f0f0f0"></div>
<svg class="a" style="left:331.9px;top:166.00px" width="9.2" height="8.7" viewBox="0 0 9.2 8.7"><g fill="#cf2323"><rect x="0" y="3" width="2" height="5.7"/><rect x="2.5" y="3" width="2" height="5.7"/><rect x="5" y="2.2" width="1.7" height="6.5"/><rect x="6.7" y="0" width="2.5" height="8.7"/></g></svg>
<div class="row" style="top:177.85px;background:#282828"></div>
<div class="a" style="left:85.5px;top:195.15px;width:938px;height:0.8px;background:#1f1f1f"></div>
<div class="t ph" style="left:137.7px;top:183.45px;color:#c2c2c2;width:181px;overflow:hidden">продвижение сайта интернет магазина</div>
<div class="t" style="left:353px;width:80.8px;text-align:right;top:183.25px;color:#c2c2c2;font-size:9.6px;letter-spacing:-0.1px">753</div>
<div class="a" style="left:105.3px;top:182.85px;width:8.5px;height:8.5px;background:#f0f0f0"></div>
<svg class="a" style="left:331.9px;top:183.85px" width="9.2" height="8.7" viewBox="0 0 9.2 8.7"><g fill="#cf2323"><rect x="0" y="3" width="2" height="5.7"/><rect x="2.5" y="3" width="2" height="5.7"/><rect x="5" y="2.2" width="1.7" height="6.5"/><rect x="6.7" y="0" width="2.5" height="8.7"/></g></svg>
<div class="row" style="top:195.70px;background:#2e2e2e"></div>
<div class="a" style="left:85.5px;top:213.00px;width:938px;height:0.8px;background:#1f1f1f"></div>
<div class="t ph" style="left:137.7px;top:201.30px;color:#dedede;width:181px;overflow:hidden">интернет продвижение цена</div>
<div class="t" style="left:353px;width:80.8px;text-align:right;top:201.10px;color:#dedede;font-size:9.6px;letter-spacing:-0.1px">620</div>
<div class="a" style="left:105.3px;top:200.70px;width:8.5px;height:8.5px;background:#f0f0f0"></div>
<svg class="a" style="left:331.9px;top:201.70px" width="9.2" height="8.7" viewBox="0 0 9.2 8.7"><g fill="#cf2323"><rect x="0" y="3" width="2" height="5.7"/><rect x="2.5" y="3" width="2" height="5.7"/><rect x="5" y="2.2" width="1.7" height="6.5"/><rect x="6.7" y="0" width="2.5" height="8.7"/></g></svg>
<div class="row" style="top:213.55px;background:#282828"></div>
<div class="a" style="left:85.5px;top:230.85px;width:938px;height:0.8px;background:#1f1f1f"></div>
<div class="t ph" style="left:137.7px;top:219.15px;color:#c2c2c2;width:181px;overflow:hidden">продвижение услуг в интернете</div>
<div class="t" style="left:353px;width:80.8px;text-align:right;top:218.95px;color:#c2c2c2;font-size:9.6px;letter-spacing:-0.1px">500</div>
<div class="a" style="left:105.3px;top:218.55px;width:8.5px;height:8.5px;background:#f0f0f0"></div>
<svg class="a" style="left:331.9px;top:219.55px" width="9.2" height="8.7" viewBox="0 0 9.2 8.7"><g fill="#cf2323"><rect x="0" y="3" width="2" height="5.7"/><rect x="2.5" y="3" width="2" height="5.7"/><rect x="5" y="2.2" width="1.7" height="6.5"/><rect x="6.7" y="0" width="2.5" height="8.7"/></g></svg>
<div class="row" style="top:231.40px;background:#2e2e2e"></div>
<div class="a" style="left:85.5px;top:248.70px;width:938px;height:0.8px;background:#1f1f1f"></div>
<div class="t ph" style="left:137.7px;top:237.00px;color:#dedede;width:181px;overflow:hidden">продвижение интернет магазина цена</div>
<div class="t" style="left:353px;width:80.8px;text-align:right;top:236.80px;color:#dedede;font-size:9.6px;letter-spacing:-0.1px">427</div>
<div class="a" style="left:105.3px;top:236.40px;width:8.5px;height:8.5px;background:#f0f0f0"></div>
<svg class="a" style="left:331.9px;top:237.40px" width="9.2" height="8.7" viewBox="0 0 9.2 8.7"><g fill="#cf2323"><rect x="0" y="3" width="2" height="5.7"/><rect x="2.5" y="3" width="2" height="5.7"/><rect x="5" y="2.2" width="1.7" height="6.5"/><rect x="6.7" y="0" width="2.5" height="8.7"/></g></svg>
<div class="row" style="top:249.25px;background:#282828"></div>
<div class="a" style="left:85.5px;top:266.55px;width:938px;height:0.8px;background:#1f1f1f"></div>
<div class="t ph" style="left:137.7px;top:254.85px;color:#c2c2c2;width:181px;overflow:hidden">seo продвижение в интернете</div>
<div class="t" style="left:353px;width:80.8px;text-align:right;top:254.65px;color:#c2c2c2;font-size:9.6px;letter-spacing:-0.1px">410</div>
<div class="a" style="left:105.3px;top:254.25px;width:8.5px;height:8.5px;background:#f0f0f0"></div>
<svg class="a" style="left:331.9px;top:255.25px" width="9.2" height="8.7" viewBox="0 0 9.2 8.7"><g fill="#cf2323"><rect x="0" y="3" width="2" height="5.7"/><rect x="2.5" y="3" width="2" height="5.7"/><rect x="5" y="2.2" width="1.7" height="6.5"/><rect x="6.7" y="0" width="2.5" height="8.7"/></g></svg>
<div class="row" style="top:267.10px;background:#2e2e2e"></div>
<div class="a" style="left:85.5px;top:284.40px;width:938px;height:0.8px;background:#1f1f1f"></div>
<div class="t ph" style="left:137.7px;top:272.70px;color:#dedede;width:181px;overflow:hidden">поисковое продвижение сайта в интернете</div>
<div class="t" style="left:353px;width:80.8px;text-align:right;top:272.50px;color:#dedede;font-size:9.6px;letter-spacing:-0.1px">374</div>
<div class="a" style="left:105.3px;top:272.10px;width:8.5px;height:8.5px;background:#f0f0f0"></div>
<svg class="a" style="left:331.9px;top:273.10px" width="9.2" height="8.7" viewBox="0 0 9.2 8.7"><g fill="#cf2323"><rect x="0" y="3" width="2" height="5.7"/><rect x="2.5" y="3" width="2" height="5.7"/><rect x="5" y="2.2" width="1.7" height="6.5"/><rect x="6.7" y="0" width="2.5" height="8.7"/></g></svg>
<div class="row" style="top:284.95px;background:#282828"></div>
<div class="a" style="left:85.5px;top:302.25px;width:938px;height:0.8px;background:#1f1f1f"></div>
<div class="t ph" style="left:137.7px;top:290.55px;color:#c2c2c2;width:181px;overflow:hidden">интернет продвижение москва</div>
<div class="t" style="left:353px;width:80.8px;text-align:right;top:290.35px;color:#c2c2c2;font-size:9.6px;letter-spacing:-0.1px">345</div>
<div class="a" style="left:105.3px;top:289.95px;width:8.5px;height:8.5px;background:#f0f0f0"></div>
<svg class="a" style="left:331.9px;top:290.95px" width="9.2" height="8.7" viewBox="0 0 9.2 8.7"><g fill="#cf2323"><rect x="0" y="3" width="2" height="5.7"/><rect x="2.5" y="3" width="2" height="5.7"/><rect x="5" y="2.2" width="1.7" height="6.5"/><rect x="6.7" y="0" width="2.5" height="8.7"/></g></svg>
<div class="row" style="top:302.80px;background:#2e2e2e"></div>
<div class="a" style="left:85.5px;top:320.10px;width:938px;height:0.8px;background:#1f1f1f"></div>
<div class="t ph" style="left:137.7px;top:308.40px;color:#dedede;width:181px;overflow:hidden">продвижение интернет маркетинг</div>
<div class="t" style="left:353px;width:80.8px;text-align:right;top:308.20px;color:#dedede;font-size:9.6px;letter-spacing:-0.1px">330</div>
<div class="a" style="left:105.3px;top:307.80px;width:8.5px;height:8.5px;background:#f0f0f0"></div>
<svg class="a" style="left:331.9px;top:308.80px" width="9.2" height="8.7" viewBox="0 0 9.2 8.7"><g fill="#cf2323"><rect x="0" y="3" width="2" height="5.7"/><rect x="2.5" y="3" width="2" height="5.7"/><rect x="5" y="2.2" width="1.7" height="6.5"/><rect x="6.7" y="0" width="2.5" height="8.7"/></g></svg>
<div class="row" style="top:320.65px;background:#282828"></div>
<div class="a" style="left:85.5px;top:337.95px;width:938px;height:0.8px;background:#1f1f1f"></div>
<div class="t ph" style="left:137.7px;top:326.25px;color:#c2c2c2;width:181px;overflow:hidden">продвижение сайтов интернет услуги</div>
<div class="t" style="left:353px;width:80.8px;text-align:right;top:326.05px;color:#c2c2c2;font-size:9.6px;letter-spacing:-0.1px">322</div>
<div class="a" style="left:105.3px;top:325.65px;width:8.5px;height:8.5px;background:#f0f0f0"></div>
<svg class="a" style="left:331.9px;top:326.65px" width="9.2" height="8.7" viewBox="0 0 9.2 8.7"><g fill="#cf2323"><rect x="0" y="3" width="2" height="5.7"/><rect x="2.5" y="3" width="2" height="5.7"/><rect x="5" y="2.2" width="1.7" height="6.5"/><rect x="6.7" y="0" width="2.5" height="8.7"/></g></svg>
<div class="row" style="top:338.50px;background:#2e2e2e"></div>
<div class="a" style="left:85.5px;top:355.80px;width:938px;height:0.8px;background:#1f1f1f"></div>
<div class="t ph" style="left:137.7px;top:344.10px;color:#dedede;width:181px;overflow:hidden">сео продвижение интернет магазина</div>
<div class="t" style="left:353px;width:80.8px;text-align:right;top:343.90px;color:#dedede;font-size:9.6px;letter-spacing:-0.1px">308</div>
<div class="a" style="left:105.3px;top:343.50px;width:8.5px;height:8.5px;background:#f0f0f0"></div>
<svg class="a" style="left:331.9px;top:344.50px" width="9.2" height="8.7" viewBox="0 0 9.2 8.7"><g fill="#cf2323"><rect x="0" y="3" width="2" height="5.7"/><rect x="2.5" y="3" width="2" height="5.7"/><rect x="5" y="2.2" width="1.7" height="6.5"/><rect x="6.7" y="0" width="2.5" height="8.7"/></g></svg>
<div class="row" style="top:356.35px;background:#282828"></div>
<div class="a" style="left:85.5px;top:373.65px;width:938px;height:0.8px;background:#1f1f1f"></div>
<div class="t ph" style="left:137.7px;top:361.95px;color:#c2c2c2;width:181px;overflow:hidden">seo продвижение интернет магазина</div>
<div class="t" style="left:353px;width:80.8px;text-align:right;top:361.75px;color:#c2c2c2;font-size:9.6px;letter-spacing:-0.1px">300</div>
<div class="a" style="left:105.3px;top:361.35px;width:8.5px;height:8.5px;background:#f0f0f0"></div>
<svg class="a" style="left:331.9px;top:362.35px" width="9.2" height="8.7" viewBox="0 0 9.2 8.7"><g fill="#cf2323"><rect x="0" y="3" width="2" height="5.7"/><rect x="2.5" y="3" width="2" height="5.7"/><rect x="5" y="2.2" width="1.7" height="6.5"/><rect x="6.7" y="0" width="2.5" height="8.7"/></g></svg>
<div class="row" style="top:374.20px;background:#2e2e2e"></div>
<div class="a" style="left:85.5px;top:391.50px;width:938px;height:0.8px;background:#1f1f1f"></div>
<div class="t ph" style="left:137.7px;top:379.80px;color:#dedede;width:181px;overflow:hidden">продвижение бизнеса в интернете</div>
<div class="t" style="left:353px;width:80.8px;text-align:right;top:379.60px;color:#dedede;font-size:9.6px;letter-spacing:-0.1px">292</div>
<div class="a" style="left:105.3px;top:379.20px;width:8.5px;height:8.5px;background:#f0f0f0"></div>
<svg class="a" style="left:331.9px;top:380.20px" width="9.2" height="8.7" viewBox="0 0 9.2 8.7"><g fill="#cf2323"><rect x="0" y="3" width="2" height="5.7"/><rect x="2.5" y="3" width="2" height="5.7"/><rect x="5" y="2.2" width="1.7" height="6.5"/><rect x="6.7" y="0" width="2.5" height="8.7"/></g></svg>
<div class="row" style="top:392.05px;background:#282828"></div>
<div class="a" style="left:85.5px;top:409.35px;width:938px;height:0.8px;background:#1f1f1f"></div>
<div class="t ph" style="left:137.7px;top:397.65px;color:#c2c2c2;width:181px;overflow:hidden">seo продвижение сайтов в интернете</div>
<div class="t" style="left:353px;width:80.8px;text-align:right;top:397.45px;color:#c2c2c2;font-size:9.6px;letter-spacing:-0.1px">252</div>
<div class="a" style="left:105.3px;top:397.05px;width:8.5px;height:8.5px;background:#f0f0f0"></div>
<svg class="a" style="left:331.9px;top:398.05px" width="9.2" height="8.7" viewBox="0 0 9.2 8.7"><g fill="#cf2323"><rect x="0" y="3" width="2" height="5.7"/><rect x="2.5" y="3" width="2" height="5.7"/><rect x="5" y="2.2" width="1.7" height="6.5"/><rect x="6.7" y="0" width="2.5" height="8.7"/></g></svg>
<div class="row" style="top:409.90px;background:#2e2e2e"></div>
<div class="a" style="left:85.5px;top:427.20px;width:938px;height:0.8px;background:#1f1f1f"></div>
<div class="t ph" style="left:137.7px;top:415.50px;color:#dedede;width:181px;overflow:hidden">продвижение интернет портала</div>
<div class="t" style="left:353px;width:80.8px;text-align:right;top:415.30px;color:#dedede;font-size:9.6px;letter-spacing:-0.1px">233</div>
<div class="a" style="left:105.3px;top:414.90px;width:8.5px;height:8.5px;background:#f0f0f0"></div>
<svg class="a" style="left:331.9px;top:415.90px" width="9.2" height="8.7" viewBox="0 0 9.2 8.7"><g fill="#cf2323"><rect x="0" y="3" width="2" height="5.7"/><rect x="2.5" y="3" width="2" height="5.7"/><rect x="5" y="2.2" width="1.7" height="6.5"/><rect x="6.7" y="0" width="2.5" height="8.7"/></g></svg>
<div class="row" style="top:427.75px;background:#282828"></div>
<div class="a" style="left:85.5px;top:445.05px;width:938px;height:0.8px;background:#1f1f1f"></div>
<div class="t ph" style="left:137.7px;top:433.35px;color:#c2c2c2;width:181px;overflow:hidden">продвижение товара в интернете</div>
<div class="t" style="left:353px;width:80.8px;text-align:right;top:433.15px;color:#c2c2c2;font-size:9.6px;letter-spacing:-0.1px">228</div>
<div class="a" style="left:105.3px;top:432.75px;width:8.5px;height:8.5px;background:#f0f0f0"></div>
<svg class="a" style="left:331.9px;top:433.75px" width="9.2" height="8.7" viewBox="0 0 9.2 8.7"><g fill="#cf2323"><rect x="0" y="3" width="2" height="5.7"/><rect x="2.5" y="3" width="2" height="5.7"/><rect x="5" y="2.2" width="1.7" height="6.5"/><rect x="6.7" y="0" width="2.5" height="8.7"/></g></svg>
<div class="row" style="top:445.60px;background:#2e2e2e"></div>
<div class="a" style="left:85.5px;top:462.90px;width:938px;height:0.8px;background:#1f1f1f"></div>
<div class="t ph" style="left:137.7px;top:451.20px;color:#dedede;width:181px;overflow:hidden">продвижение компании в интернете</div>
<div class="t" style="left:353px;width:80.8px;text-align:right;top:451.00px;color:#dedede;font-size:9.6px;letter-spacing:-0.1px">215</div>
<div class="a" style="left:105.3px;top:450.60px;width:8.5px;height:8.5px;background:#f0f0f0"></div>
<svg class="a" style="left:331.9px;top:451.60px" width="9.2" height="8.7" viewBox="0 0 9.2 8.7"><g fill="#cf2323"><rect x="0" y="3" width="2" height="5.7"/><rect x="2.5" y="3" width="2" height="5.7"/><rect x="5" y="2.2" width="1.7" height="6.5"/><rect x="6.7" y="0" width="2.5" height="8.7"/></g></svg>
<div class="row" style="top:463.45px;background:#282828"></div>
<div class="a" style="left:85.5px;top:480.75px;width:938px;height:0.8px;background:#1f1f1f"></div>
<div class="t ph" style="left:137.7px;top:469.05px;color:#c2c2c2;width:181px;overflow:hidden">продвижение сайта в интернете москва</div>
<div class="t" style="left:353px;width:80.8px;text-align:right;top:468.85px;color:#c2c2c2;font-size:9.6px;letter-spacing:-0.1px">211</div>
<div class="a" style="left:105.3px;top:468.45px;width:8.5px;height:8.5px;background:#f0f0f0"></div>
<svg class="a" style="left:331.9px;top:469.45px" width="9.2" height="8.7" viewBox="0 0 9.2 8.7"><g fill="#cf2323"><rect x="0" y="3" width="2" height="5.7"/><rect x="2.5" y="3" width="2" height="5.7"/><rect x="5" y="2.2" width="1.7" height="6.5"/><rect x="6.7" y="0" width="2.5" height="8.7"/></g></svg>
<div class="row" style="top:481.30px;background:#2e2e2e"></div>
<div class="a" style="left:85.5px;top:498.60px;width:938px;height:0.8px;background:#1f1f1f"></div>
<div class="t ph" style="left:137.7px;top:486.90px;color:#dedede;width:181px;overflow:hidden">оптимизация сайтов и интернет продвижение</div>
<div class="t" style="left:353px;width:80.8px;text-align:right;top:486.70px;color:#dedede;font-size:9.6px;letter-spacing:-0.1px">198</div>
<div class="a" style="left:105.3px;top:486.30px;width:8.5px;height:8.5px;background:#f0f0f0"></div>
<svg class="a" style="left:331.9px;top:487.30px" width="9.2" height="8.7" viewBox="0 0 9.2 8.7"><g fill="#cf2323"><rect x="0" y="3" width="2" height="5.7"/><rect x="2.5" y="3" width="2" height="5.7"/><rect x="5" y="2.2" width="1.7" height="6.5"/><rect x="6.7" y="0" width="2.5" height="8.7"/></g></svg>
<div class="row" style="top:499.15px;background:#282828"></div>
<div class="a" style="left:85.5px;top:516.45px;width:938px;height:0.8px;background:#1f1f1f"></div>
<div class="t ph" style="left:137.7px;top:504.75px;color:#c2c2c2;width:181px;overflow:hidden">раскрутка и продвижение интернет магазина</div>
<div class="t" style="left:353px;width:80.8px;text-align:right;top:504.55px;color:#c2c2c2;font-size:9.6px;letter-spacing:-0.1px">192</div>
<div class="a" style="left:105.3px;top:504.15px;width:8.5px;height:8.5px;background:#f0f0f0"></div>
<svg class="a" style="left:331.9px;top:505.15px" width="9.2" height="8.7" viewBox="0 0 9.2 8.7"><g fill="#cf2323"><rect x="0" y="3" width="2" height="5.7"/><rect x="2.5" y="3" width="2" height="5.7"/><rect x="5" y="2.2" width="1.7" height="6.5"/><rect x="6.7" y="0" width="2.5" height="8.7"/></g></svg>
<div class="row" style="top:517.00px;background:#2e2e2e"></div>
<div class="a" style="left:85.5px;top:534.30px;width:938px;height:0.8px;background:#1f1f1f"></div>
<div class="t ph" style="left:137.7px;top:522.60px;color:#dedede;width:181px;overflow:hidden">продвижение недвижимости в интернете</div>
<div class="t" style="left:353px;width:80.8px;text-align:right;top:522.40px;color:#dedede;font-size:9.6px;letter-spacing:-0.1px">188</div>
<div class="a" style="left:105.3px;top:522.00px;width:8.5px;height:8.5px;background:#f0f0f0"></div>
<svg class="a" style="left:331.9px;top:523.00px" width="9.2" height="8.7" viewBox="0 0 9.2 8.7"><g fill="#cf2323"><rect x="0" y="3" width="2" height="5.7"/><rect x="2.5" y="3" width="2" height="5.7"/><rect x="5" y="2.2" width="1.7" height="6.5"/><rect x="6.7" y="0" width="2.5" height="8.7"/></g></svg>
<div class="row" style="top:534.85px;background:#282828"></div>
<div class="a" style="left:85.5px;top:552.15px;width:938px;height:0.8px;background:#1f1f1f"></div>
<div class="t ph" style="left:137.7px;top:540.45px;color:#c2c2c2;width:181px;overflow:hidden">продвижение интернет магазина стоимость</div>
<div class="t" style="left:353px;width:80.8px;text-align:right;top:540.25px;color:#c2c2c2;font-size:9.6px;letter-spacing:-0.1px">182</div>
<div class="a" style="left:105.3px;top:539.85px;width:8.5px;height:8.5px;background:#f0f0f0"></div>
<svg class="a" style="left:331.9px;top:540.85px" width="9.2" height="8.7" viewBox="0 0 9.2 8.7"><g fill="#cf2323"><rect x="0" y="3" width="2" height="5.7"/><rect x="2.5" y="3" width="2" height="5.7"/><rect x="5" y="2.2" width="1.7" height="6.5"/><rect x="6.7" y="0" width="2.5" height="8.7"/></g></svg>
<div class="row" style="top:552.70px;background:#2e2e2e"></div>
<div class="a" style="left:85.5px;top:570.00px;width:938px;height:0.8px;background:#1f1f1f"></div>
<div class="t ph" style="left:137.7px;top:558.30px;color:#dedede;width:181px;overflow:hidden">интернет маркетинг продвижение сайтов</div>
<div class="t" style="left:353px;width:80.8px;text-align:right;top:558.10px;color:#dedede;font-size:9.6px;letter-spacing:-0.1px">177</div>
<div class="a" style="left:105.3px;top:557.70px;width:8.5px;height:8.5px;background:#f0f0f0"></div>
<svg class="a" style="left:331.9px;top:558.70px" width="9.2" height="8.7" viewBox="0 0 9.2 8.7"><g fill="#cf2323"><rect x="0" y="3" width="2" height="5.7"/><rect x="2.5" y="3" width="2" height="5.7"/><rect x="5" y="2.2" width="1.7" height="6.5"/><rect x="6.7" y="0" width="2.5" height="8.7"/></g></svg>
<div class="row" style="top:570.55px;background:#282828"></div>
<div class="a" style="left:85.5px;top:587.85px;width:938px;height:0.8px;background:#1f1f1f"></div>
<div class="t ph" style="left:137.7px;top:576.15px;color:#c2c2c2;width:181px;overflow:hidden">поисковое продвижение интернет магазина</div>
<div class="t" style="left:353px;width:80.8px;text-align:right;top:575.95px;color:#c2c2c2;font-size:9.6px;letter-spacing:-0.1px">147</div>
<div class="a" style="left:105.3px;top:575.55px;width:8.5px;height:8.5px;background:#f0f0f0"></div>
<svg class="a" style="left:331.9px;top:576.55px" width="9.2" height="8.7" viewBox="0 0 9.2 8.7"><g fill="#cf2323"><rect x="0" y="3" width="2" height="5.7"/><rect x="2.5" y="3" width="2" height="5.7"/><rect x="5" y="2.2" width="1.7" height="6.5"/><rect x="6.7" y="0" width="2.5" height="8.7"/></g></svg>
<div class="row" style="top:588.40px;background:#2e2e2e"></div>
<div class="a" style="left:85.5px;top:605.70px;width:938px;height:0.8px;background:#1f1f1f"></div>
<div class="t ph" style="left:137.7px;top:594.00px;color:#dedede;width:181px;overflow:hidden">продвижение сайта в интернете цена</div>
<div class="t" style="left:353px;width:80.8px;text-align:right;top:593.80px;color:#dedede;font-size:9.6px;letter-spacing:-0.1px">133</div>
<div class="a" style="left:105.3px;top:593.40px;width:8.5px;height:8.5px;background:#f0f0f0"></div>
<svg class="a" style="left:331.9px;top:594.40px" width="9.2" height="8.7" viewBox="0 0 9.2 8.7"><g fill="#cf2323"><rect x="0" y="3" width="2" height="5.7"/><rect x="2.5" y="3" width="2" height="5.7"/><rect x="5" y="2.2" width="1.7" height="6.5"/><rect x="6.7" y="0" width="2.5" height="8.7"/></g></svg>
<div class="row" style="top:606.25px;background:#282828"></div>
<div class="a" style="left:85.5px;top:623.55px;width:938px;height:0.8px;background:#1f1f1f"></div>
<div class="t ph" style="left:137.7px;top:611.85px;color:#c2c2c2;width:181px;overflow:hidden">заказать продвижение в интернете</div>
<div class="t" style="left:353px;width:80.8px;text-align:right;top:611.65px;color:#c2c2c2;font-size:9.6px;letter-spacing:-0.1px">126</div>
<div class="a" style="left:105.3px;top:611.25px;width:8.5px;height:8.5px;background:#f0f0f0"></div>
<svg class="a" style="left:331.9px;top:612.25px" width="9.2" height="8.7" viewBox="0 0 9.2 8.7"><g fill="#cf2323"><rect x="0" y="3" width="2" height="5.7"/><rect x="2.5" y="3" width="2" height="5.7"/><rect x="5" y="2.2" width="1.7" height="6.5"/><rect x="6.7" y="0" width="2.5" height="8.7"/></g></svg>
<div class="a" style="left:0;top:124.3px;width:39px;height:494px;background:#5f5f5f"></div>
<div class="a" style="left:39px;top:124.3px;width:41px;height:494px;background:#5b5b5b"></div>
<div class="a" style="left:80px;top:124.3px;width:1px;height:494px;background:#5c5c5c"></div>
<div class="a" style="left:81px;top:124.3px;width:4.3px;height:494px;background:#797979"></div>
<div class="a" style="left:85.3px;top:124.3px;width:0.8px;height:494px;background:#454545"></div>
<div class="a" style="left:39px;top:125.30px;width:41px;height:16.8px;background:#6e6e6e"></div>
<div class="t" style="left:39px;width:41px;text-align:center;top:129.80px;font-size:8.6px;color:#303030;letter-spacing:-0.1px">52</div>
<svg class="a" style="left:2.9px;top:130.20px" width="6.1" height="5.8" viewBox="0 0 6.1 5.8"><rect width="6.1" height="5.8" rx="0.6" fill="#f2f2f2"/><path d="M0.8 2.9 L2.6 1.2 V2.3 H5.3 V3.5 H2.6 V4.6 Z" fill="#111"/></svg>
<svg class="a" style="left:14.8px;top:129.20px" width="7.1" height="8.9" viewBox="0 0 7.1 8.9"><path d="M1.2 4 V2.6 A2.35 2.35 0 0 1 5.9 2.6 V4 Z" fill="#ececec"/><rect x="2.6" y="1.6" width="1.9" height="1.6" rx="0.8" fill="#555"/><rect x="0" y="3.8" width="7.1" height="5.1" rx="0.5" fill="#efefef"/><rect x="3.2" y="5.6" width="0.8" height="1.4" fill="#9a9a9a"/></svg>
<svg class="a" style="left:27.9px;top:128.90px" width="8.2" height="8.8" viewBox="0 0 8.2 8.8"><path d="M0.4 0.6 Q4.1 -0.1 7.8 0.6 V4.6 Q7.8 7 4.1 8.5 Q0.4 7 0.4 4.6 Z" fill="#7ea4e4" stroke="#3d5d98" stroke-width="0.7"/><path d="M2.3 4.2 L3.7 5.4 L6 3" fill="none" stroke="#dce8ff" stroke-width="0.9"/></svg>
<div class="a" style="left:39px;top:143.15px;width:41px;height:16.8px;background:#6e6e6e"></div>
<div class="t" style="left:39px;width:41px;text-align:center;top:147.65px;font-size:8.6px;color:#303030;letter-spacing:-0.1px">53</div>
<svg class="a" style="left:2.9px;top:148.05px" width="6.1" height="5.8" viewBox="0 0 6.1 5.8"><rect width="6.1" height="5.8" rx="0.6" fill="#f2f2f2"/><path d="M0.8 2.9 L2.6 1.2 V2.3 H5.3 V3.5 H2.6 V4.6 Z" fill="#111"/></svg>
<svg class="a" style="left:14.8px;top:147.05px" width="7.1" height="8.9" viewBox="0 0 7.1 8.9"><path d="M1.2 4 V2.6 A2.35 2.35 0 0 1 5.9 2.6 V4 Z" fill="#ececec"/><rect x="2.6" y="1.6" width="1.9" height="1.6" rx="0.8" fill="#555"/><rect x="0" y="3.8" width="7.1" height="5.1" rx="0.5" fill="#efefef"/><rect x="3.2" y="5.6" width="0.8" height="1.4" fill="#9a9a9a"/></svg>
<svg class="a" style="left:27.9px;top:146.75px" width="8.2" height="8.8" viewBox="0 0 8.2 8.8"><path d="M0.4 0.6 Q4.1 -0.1 7.8 0.6 V4.6 Q7.8 7 4.1 8.5 Q0.4 7 0.4 4.6 Z" fill="#7ea4e4" stroke="#3d5d98" stroke-width="0.7"/><path d="M2.3 4.2 L3.7 5.4 L6 3" fill="none" stroke="#dce8ff" stroke-width="0.9"/></svg>
<div class="a" style="left:39px;top:161.00px;width:41px;height:16.8px;background:#6e6e6e"></div>
<div class="t" style="left:39px;width:41px;text-align:center;top:165.50px;font-size:8.6px;color:#303030;letter-spacing:-0.1px">54</div>
<svg class="a" style="left:2.9px;top:165.90px" width="6.1" height="5.8" viewBox="0 0 6.1 5.8"><rect width="6.1" height="5.8" rx="0.6" fill="#f2f2f2"/><path d="M0.8 2.9 L2.6 1.2 V2.3 H5.3 V3.5 H2.6 V4.6 Z" fill="#111"/></svg>
<svg class="a" style="left:14.8px;top:164.90px" width="7.1" height="8.9" viewBox="0 0 7.1 8.9"><path d="M1.2 4 V2.6 A2.35 2.35 0 0 1 5.9 2.6 V4 Z" fill="#ececec"/><rect x="2.6" y="1.6" width="1.9" height="1.6" rx="0.8" fill="#555"/><rect x="0" y="3.8" width="7.1" height="5.1" rx="0.5" fill="#efefef"/><rect x="3.2" y="5.6" width="0.8" height="1.4" fill="#9a9a9a"/></svg>
<svg class="a" style="left:27.9px;top:164.60px" width="8.2" height="8.8" viewBox="0 0 8.2 8.8"><path d="M0.4 0.6 Q4.1 -0.1 7.8 0.6 V4.6 Q7.8 7 4.1 8.5 Q0.4 7 0.4 4.6 Z" fill="#7ea4e4" stroke="#3d5d98" stroke-width="0.7"/><path d="M2.3 4.2 L3.7 5.4 L6 3" fill="none" stroke="#dce8ff" stroke-width="0.9"/></svg>
<div class="a" style="left:39px;top:178.85px;width:41px;height:16.8px;background:#6e6e6e"></div>
<div class="t" style="left:39px;width:41px;text-align:center;top:183.35px;font-size:8.6px;color:#303030;letter-spacing:-0.1px">55</div>
<svg class="a" style="left:2.9px;top:183.75px" width="6.1" height="5.8" viewBox="0 0 6.1 5.8"><rect width="6.1" height="5.8" rx="0.6" fill="#f2f2f2"/><path d="M0.8 2.9 L2.6 1.2 V2.3 H5.3 V3.5 H2.6 V4.6 Z" fill="#111"/></svg>
<svg class="a" style="left:14.8px;top:182.75px" width="7.1" height="8.9" viewBox="0 0 7.1 8.9"><path d="M1.2 4 V2.6 A2.35 2.35 0 0 1 5.9 2.6 V4 Z" fill="#ececec"/><rect x="2.6" y="1.6" width="1.9" height="1.6" rx="0.8" fill="#555"/><rect x="0" y="3.8" width="7.1" height="5.1" rx="0.5" fill="#efefef"/><rect x="3.2" y="5.6" width="0.8" height="1.4" fill="#9a9a9a"/></svg>
<svg class="a" style="left:27.9px;top:182.45px" width="8.2" height="8.8" viewBox="0 0 8.2 8.8"><path d="M0.4 0.6 Q4.1 -0.1 7.8 0.6 V4.6 Q7.8 7 4.1 8.5 Q0.4 7 0.4 4.6 Z" fill="#7ea4e4" stroke="#3d5d98" stroke-width="0.7"/><path d="M2.3 4.2 L3.7 5.4 L6 3" fill="none" stroke="#dce8ff" stroke-width="0.9"/></svg>
<div class="a" style="left:39px;top:196.70px;width:41px;height:16.8px;background:#6e6e6e"></div>
<div class="t" style="left:39px;width:41px;text-align:center;top:201.20px;font-size:8.6px;color:#303030;letter-spacing:-0.1px">56</div>
<svg class="a" style="left:2.9px;top:201.60px" width="6.1" height="5.8" viewBox="0 0 6.1 5.8"><rect width="6.1" height="5.8" rx="0.6" fill="#f2f2f2"/><path d="M0.8 2.9 L2.6 1.2 V2.3 H5.3 V3.5 H2.6 V4.6 Z" fill="#111"/></svg>
<svg class="a" style="left:14.8px;top:200.60px" width="7.1" height="8.9" viewBox="0 0 7.1 8.9"><path d="M1.2 4 V2.6 A2.35 2.35 0 0 1 5.9 2.6 V4 Z" fill="#ececec"/><rect x="2.6" y="1.6" width="1.9" height="1.6" rx="0.8" fill="#555"/><rect x="0" y="3.8" width="7.1" height="5.1" rx="0.5" fill="#efefef"/><rect x="3.2" y="5.6" width="0.8" height="1.4" fill="#9a9a9a"/></svg>
<svg class="a" style="left:27.9px;top:200.30px" width="8.2" height="8.8" viewBox="0 0 8.2 8.8"><path d="M0.4 0.6 Q4.1 -0.1 7.8 0.6 V4.6 Q7.8 7 4.1 8.5 Q0.4 7 0.4 4.6 Z" fill="#7ea4e4" stroke="#3d5d98" stroke-width="0.7"/><path d="M2.3 4.2 L3.7 5.4 L6 3" fill="none" stroke="#dce8ff" stroke-width="0.9"/></svg>
<div class="a" style="left:39px;top:214.55px;width:41px;height:16.8px;background:#6e6e6e"></div>
<div class="t" style="left:39px;width:41px;text-align:center;top:219.05px;font-size:8.6px;color:#303030;letter-spacing:-0.1px">57</div>
<svg class="a" style="left:2.9px;top:219.45px" width="6.1" height="5.8" viewBox="0 0 6.1 5.8"><rect width="6.1" height="5.8" rx="0.6" fill="#f2f2f2"/><path d="M0.8 2.9 L2.6 1.2 V2.3 H5.3 V3.5 H2.6 V4.6 Z" fill="#111"/></svg>
<svg class="a" style="left:14.8px;top:218.45px" width="7.1" height="8.9" viewBox="0 0 7.1 8.9"><path d="M1.2 4 V2.6 A2.35 2.35 0 0 1 5.9 2.6 V4 Z" fill="#ececec"/><rect x="2.6" y="1.6" width="1.9" height="1.6" rx="0.8" fill="#555"/><rect x="0" y="3.8" width="7.1" height="5.1" rx="0.5" fill="#efefef"/><rect x="3.2" y="5.6" width="0.8" height="1.4" fill="#9a9a9a"/></svg>
<svg class="a" style="left:27.9px;top:218.15px" width="8.2" height="8.8" viewBox="0 0 8.2 8.8"><path d="M0.4 0.6 Q4.1 -0.1 7.8 0.6 V4.6 Q7.8 7 4.1 8.5 Q0.4 7 0.4 4.6 Z" fill="#7ea4e4" stroke="#3d5d98" stroke-width="0.7"/><path d="M2.3 4.2 L3.7 5.4 L6 3" fill="none" stroke="#dce8ff" stroke-width="0.9"/></svg>
<div class="a" style="left:39px;top:232.40px;width:41px;height:16.8px;background:#6e6e6e"></div>
<div class="t" style="left:39px;width:41px;text-align:center;top:236.90px;font-size:8.6px;color:#303030;letter-spacing:-0.1px">58</div>
<svg class="a" style="left:2.9px;top:237.30px" width="6.1" height="5.8" viewBox="0 0 6.1 5.8"><rect width="6.1" height="5.8" rx="0.6" fill="#f2f2f2"/><path d="M0.8 2.9 L2.6 1.2 V2.3 H5.3 V3.5 H2.6 V4.6 Z" fill="#111"/></svg>
<svg class="a" style="left:14.8px;top:236.30px" width="7.1" height="8.9" viewBox="0 0 7.1 8.9"><path d="M1.2 4 V2.6 A2.35 2.35 0 0 1 5.9 2.6 V4 Z" fill="#ececec"/><rect x="2.6" y="1.6" width="1.9" height="1.6" rx="0.8" fill="#555"/><rect x="0" y="3.8" width="7.1" height="5.1" rx="0.5" fill="#efefef"/><rect x="3.2" y="5.6" width="0.8" height="1.4" fill="#9a9a9a"/></svg>
<svg class="a" style="left:27.9px;top:236.00px" width="8.2" height="8.8" viewBox="0 0 8.2 8.8"><path d="M0.4 0.6 Q4.1 -0.1 7.8 0.6 V4.6 Q7.8 7 4.1 8.5 Q0.4 7 0.4 4.6 Z" fill="#7ea4e4" stroke="#3d5d98" stroke-width="0.7"/><path d="M2.3 4.2 L3.7 5.4 L6 3" fill="none" stroke="#dce8ff" stroke-width="0.9"/></svg>
<div class="a" style="left:39px;top:250.25px;width:41px;height:16.8px;background:#6e6e6e"></div>
<div class="t" style="left:39px;width:41px;text-align:center;top:254.75px;font-size:8.6px;color:#303030;letter-spacing:-0.1px">59</div>
<svg class="a" style="left:2.9px;top:255.15px" width="6.1" height="5.8" viewBox="0 0 6.1 5.8"><rect width="6.1" height="5.8" rx="0.6" fill="#f2f2f2"/><path d="M0.8 2.9 L2.6 1.2 V2.3 H5.3 V3.5 H2.6 V4.6 Z" fill="#111"/></svg>
<svg class="a" style="left:14.8px;top:254.15px" width="7.1" height="8.9" viewBox="0 0 7.1 8.9"><path d="M1.2 4 V2.6 A2.35 2.35 0 0 1 5.9 2.6 V4 Z" fill="#ececec"/><rect x="2.6" y="1.6" width="1.9" height="1.6" rx="0.8" fill="#555"/><rect x="0" y="3.8" width="7.1" height="5.1" rx="0.5" fill="#efefef"/><rect x="3.2" y="5.6" width="0.8" height="1.4" fill="#9a9a9a"/></svg>
<svg class="a" style="left:27.9px;top:253.85px" width="8.2" height="8.8" viewBox="0 0 8.2 8.8"><path d="M0.4 0.6 Q4.1 -0.1 7.8 0.6 V4.6 Q7.8 7 4.1 8.5 Q0.4 7 0.4 4.6 Z" fill="#7ea4e4" stroke="#3d5d98" stroke-width="0.7"/><path d="M2.3 4.2 L3.7 5.4 L6 3" fill="none" stroke="#dce8ff" stroke-width="0.9"/></svg>
<div class="a" style="left:39px;top:268.10px;width:41px;height:16.8px;background:#6e6e6e"></div>
<div class="t" style="left:39px;width:41px;text-align:center;top:272.60px;font-size:8.6px;color:#303030;letter-spacing:-0.1px">60</div>
<svg class="a" style="left:2.9px;top:273.00px" width="6.1" height="5.8" viewBox="0 0 6.1 5.8"><rect width="6.1" height="5.8" rx="0.6" fill="#f2f2f2"/><path d="M0.8 2.9 L2.6 1.2 V2.3 H5.3 V3.5 H2.6 V4.6 Z" fill="#111"/></svg>
<svg class="a" style="left:14.8px;top:272.00px" width="7.1" height="8.9" viewBox="0 0 7.1 8.9"><path d="M1.2 4 V2.6 A2.35 2.35 0 0 1 5.9 2.6 V4 Z" fill="#ececec"/><rect x="2.6" y="1.6" width="1.9" height="1.6" rx="0.8" fill="#555"/><rect x="0" y="3.8" width="7.1" height="5.1" rx="0.5" fill="#efefef"/><rect x="3.2" y="5.6" width="0.8" height="1.4" fill="#9a9a9a"/></svg>
<svg class="a" style="left:27.9px;top:271.70px" width="8.2" height="8.8" viewBox="0 0 8.2 8.8"><path d="M0.4 0.6 Q4.1 -0.1 7.8 0.6 V4.6 Q7.8 7 4.1 8.5 Q0.4 7 0.4 4.6 Z" fill="#7ea4e4" stroke="#3d5d98" stroke-width="0.7"/><path d="M2.3 4.2 L3.7 5.4 L6 3" fill="none" stroke="#dce8ff" stroke-width="0.9"/></svg>
<div class="a" style="left:39px;top:285.95px;width:41px;height:16.8px;background:#6e6e6e"></div>
<div class="t" style="left:39px;width:41px;text-align:center;top:290.45px;font-size:8.6px;color:#303030;letter-spacing:-0.1px">61</div>
<svg class="a" style="left:2.9px;top:290.85px" width="6.1" height="5.8" viewBox="0 0 6.1 5.8"><rect width="6.1" height="5.8" rx="0.6" fill="#f2f2f2"/><path d="M0.8 2.9 L2.6 1.2 V2.3 H5.3 V3.5 H2.6 V4.6 Z" fill="#111"/></svg>
<svg class="a" style="left:14.8px;top:289.85px" width="7.1" height="8.9" viewBox="0 0 7.1 8.9"><path d="M1.2 4 V2.6 A2.35 2.35 0 0 1 5.9 2.6 V4 Z" fill="#ececec"/><rect x="2.6" y="1.6" width="1.9" height="1.6" rx="0.8" fill="#555"/><rect x="0" y="3.8" width="7.1" height="5.1" rx="0.5" fill="#efefef"/><rect x="3.2" y="5.6" width="0.8" height="1.4" fill="#9a9a9a"/></svg>
<svg class="a" style="left:27.9px;top:289.55px" width="8.2" height="8.8" viewBox="0 0 8.2 8.8"><path d="M0.4 0.6 Q4.1 -0.1 7.8 0.6 V4.6 Q7.8 7 4.1 8.5 Q0.4 7 0.4 4.6 Z" fill="#7ea4e4" stroke="#3d5d98" stroke-width="0.7"/><path d="M2.3 4.2 L3.7 5.4 L6 3" fill="none" stroke="#dce8ff" stroke-width="0.9"/></svg>
<div class="a" style="left:39px;top:303.80px;width:41px;height:16.8px;background:#6e6e6e"></div>
<div class="t" style="left:39px;width:41px;text-align:center;top:308.30px;font-size:8.6px;color:#303030;letter-spacing:-0.1px">62</div>
<svg class="a" style="left:2.9px;top:308.70px" width="6.1" height="5.8" viewBox="0 0 6.1 5.8"><rect width="6.1" height="5.8" rx="0.6" fill="#f2f2f2"/><path d="M0.8 2.9 L2.6 1.2 V2.3 H5.3 V3.5 H2.6 V4.6 Z" fill="#111"/></svg>
<svg class="a" style="left:14.8px;top:307.70px" width="7.1" height="8.9" viewBox="0 0 7.1 8.9"><path d="M1.2 4 V2.6 A2.35 2.35 0 0 1 5.9 2.6 V4 Z" fill="#ececec"/><rect x="2.6" y="1.6" width="1.9" height="1.6" rx="0.8" fill="#555"/><rect x="0" y="3.8" width="7.1" height="5.1" rx="0.5" fill="#efefef"/><rect x="3.2" y="5.6" width="0.8" height="1.4" fill="#9a9a9a"/></svg>
<svg class="a" style="left:27.9px;top:307.40px" width="8.2" height="8.8" viewBox="0 0 8.2 8.8"><path d="M0.4 0.6 Q4.1 -0.1 7.8 0.6 V4.6 Q7.8 7 4.1 8.5 Q0.4 7 0.4 4.6 Z" fill="#7ea4e4" stroke="#3d5d98" stroke-width="0.7"/><path d="M2.3 4.2 L3.7 5.4 L6 3" fill="none" stroke="#dce8ff" stroke-width="0.9"/></svg>
<div class="a" style="left:39px;top:321.65px;width:41px;height:16.8px;background:#6e6e6e"></div>
<div class="t" style="left:39px;width:41px;text-align:center;top:326.15px;font-size:8.6px;color:#303030;letter-spacing:-0.1px">63</div>
<svg class="a" style="left:2.9px;top:326.55px" width="6.1" height="5.8" viewBox="0 0 6.1 5.8"><rect width="6.1" height="5.8" rx="0.6" fill="#f2f2f2"/><path d="M0.8 2.9 L2.6 1.2 V2.3 H5.3 V3.5 H2.6 V4.6 Z" fill="#111"/></svg>
<svg class="a" style="left:14.8px;top:325.55px" width="7.1" height="8.9" viewBox="0 0 7.1 8.9"><path d="M1.2 4 V2.6 A2.35 2.35 0 0 1 5.9 2.6 V4 Z" fill="#ececec"/><rect x="2.6" y="1.6" width="1.9" height="1.6" rx="0.8" fill="#555"/><rect x="0" y="3.8" width="7.1" height="5.1" rx="0.5" fill="#efefef"/><rect x="3.2" y="5.6" width="0.8" height="1.4" fill="#9a9a9a"/></svg>
<svg class="a" style="left:27.9px;top:325.25px" width="8.2" height="8.8" viewBox="0 0 8.2 8.8"><path d="M0.4 0.6 Q4.1 -0.1 7.8 0.6 V4.6 Q7.8 7 4.1 8.5 Q0.4 7 0.4 4.6 Z" fill="#7ea4e4" stroke="#3d5d98" stroke-width="0.7"/><path d="M2.3 4.2 L3.7 5.4 L6 3" fill="none" stroke="#dce8ff" stroke-width="0.9"/></svg>
<div class="a" style="left:39px;top:339.50px;width:41px;height:16.8px;background:#6e6e6e"></div>
<div class="t" style="left:39px;width:41px;text-align:center;top:344.00px;font-size:8.6px;color:#303030;letter-spacing:-0.1px">64</div>
<svg class="a" style="left:2.9px;top:344.40px" width="6.1" height="5.8" viewBox="0 0 6.1 5.8"><rect width="6.1" height="5.8" rx="0.6" fill="#f2f2f2"/><path d="M0.8 2.9 L2.6 1.2 V2.3 H5.3 V3.5 H2.6 V4.6 Z" fill="#111"/></svg>
<svg class="a" style="left:14.8px;top:343.40px" width="7.1" height="8.9" viewBox="0 0 7.1 8.9"><path d="M1.2 4 V2.6 A2.35 2.35 0 0 1 5.9 2.6 V4 Z" fill="#ececec"/><rect x="2.6" y="1.6" width="1.9" height="1.6" rx="0.8" fill="#555"/><rect x="0" y="3.8" width="7.1" height="5.1" rx="0.5" fill="#efefef"/><rect x="3.2" y="5.6" width="0.8" height="1.4" fill="#9a9a9a"/></svg>
<svg class="a" style="left:27.9px;top:343.10px" width="8.2" height="8.8" viewBox="0 0 8.2 8.8"><path d="M0.4 0.6 Q4.1 -0.1 7.8 0.6 V4.6 Q7.8 7 4.1 8.5 Q0.4 7 0.4 4.6 Z" fill="#7ea4e4" stroke="#3d5d98" stroke-width="0.7"/><path d="M2.3 4.2 L3.7 5.4 L6 3" fill="none" stroke="#dce8ff" stroke-width="0.9"/></svg>
<div class="a" style="left:39px;top:357.35px;width:41px;height:16.8px;background:#6e6e6e"></div>
<div class="t" style="left:39px;width:41px;text-align:center;top:361.85px;font-size:8.6px;color:#303030;letter-spacing:-0.1px">65</div>
<svg class="a" style="left:2.9px;top:362.25px" width="6.1" height="5.8" viewBox="0 0 6.1 5.8"><rect width="6.1" height="5.8" rx="0.6" fill="#f2f2f2"/><path d="M0.8 2.9 L2.6 1.2 V2.3 H5.3 V3.5 H2.6 V4.6 Z" fill="#111"/></svg>
<svg class="a" style="left:14.8px;top:361.25px" width="7.1" height="8.9" viewBox="0 0 7.1 8.9"><path d="M1.2 4 V2.6 A2.35 2.35 0 0 1 5.9 2.6 V4 Z" fill="#ececec"/><rect x="2.6" y="1.6" width="1.9" height="1.6" rx="0.8" fill="#555"/><rect x="0" y="3.8" width="7.1" height="5.1" rx="0.5" fill="#efefef"/><rect x="3.2" y="5.6" width="0.8" height="1.4" fill="#9a9a9a"/></svg>
<svg class="a" style="left:27.9px;top:360.95px" width="8.2" height="8.8" viewBox="0 0 8.2 8.8"><path d="M0.4 0.6 Q4.1 -0.1 7.8 0.6 V4.6 Q7.8 7 4.1 8.5 Q0.4 7 0.4 4.6 Z" fill="#7ea4e4" stroke="#3d5d98" stroke-width="0.7"/><path d="M2.3 4.2 L3.7 5.4 L6 3" fill="none" stroke="#dce8ff" stroke-width="0.9"/></svg>
<div class="a" style="left:39px;top:375.20px;width:41px;height:16.8px;background:#6e6e6e"></div>
<div class="t" style="left:39px;width:41px;text-align:center;top:379.70px;font-size:8.6px;color:#303030;letter-spacing:-0.1px">66</div>
<svg class="a" style="left:2.9px;top:380.10px" width="6.1" height="5.8" viewBox="0 0 6.1 5.8"><rect width="6.1" height="5.8" rx="0.6" fill="#f2f2f2"/><path d="M0.8 2.9 L2.6 1.2 V2.3 H5.3 V3.5 H2.6 V4.6 Z" fill="#111"/></svg>
<svg class="a" style="left:14.8px;top:379.10px" width="7.1" height="8.9" viewBox="0 0 7.1 8.9"><path d="M1.2 4 V2.6 A2.35 2.35 0 0 1 5.9 2.6 V4 Z" fill="#ececec"/><rect x="2.6" y="1.6" width="1.9" height="1.6" rx="0.8" fill="#555"/><rect x="0" y="3.8" width="7.1" height="5.1" rx="0.5" fill="#efefef"/><rect x="3.2" y="5.6" width="0.8" height="1.4" fill="#9a9a9a"/></svg>
<svg class="a" style="left:27.9px;top:378.80px" width="8.2" height="8.8" viewBox="0 0 8.2 8.8"><path d="M0.4 0.6 Q4.1 -0.1 7.8 0.6 V4.6 Q7.8 7 4.1 8.5 Q0.4 7 0.4 4.6 Z" fill="#7ea4e4" stroke="#3d5d98" stroke-width="0.7"/><path d="M2.3 4.2 L3.7 5.4 L6 3" fill="none" stroke="#dce8ff" stroke-width="0.9"/></svg>
<div class="a" style="left:39px;top:393.05px;width:41px;height:16.8px;background:#6e6e6e"></div>
<div class="t" style="left:39px;width:41px;text-align:center;top:397.55px;font-size:8.6px;color:#303030;letter-spacing:-0.1px">67</div>
<svg class="a" style="left:2.9px;top:397.95px" width="6.1" height="5.8" viewBox="0 0 6.1 5.8"><rect width="6.1" height="5.8" rx="0.6" fill="#f2f2f2"/><path d="M0.8 2.9 L2.6 1.2 V2.3 H5.3 V3.5 H2.6 V4.6 Z" fill="#111"/></svg>
<svg class="a" style="left:14.8px;top:396.95px" width="7.1" height="8.9" viewBox="0 0 7.1 8.9"><path d="M1.2 4 V2.6 A2.35 2.35 0 0 1 5.9 2.6 V4 Z" fill="#ececec"/><rect x="2.6" y="1.6" width="1.9" height="1.6" rx="0.8" fill="#555"/><rect x="0" y="3.8" width="7.1" height="5.1" rx="0.5" fill="#efefef"/><rect x="3.2" y="5.6" width="0.8" height="1.4" fill="#9a9a9a"/></svg>
<svg class="a" style="left:27.9px;top:396.65px" width="8.2" height="8.8" viewBox="0 0 8.2 8.8"><path d="M0.4 0.6 Q4.1 -0.1 7.8 0.6 V4.6 Q7.8 7 4.1 8.5 Q0.4 7 0.4 4.6 Z" fill="#7ea4e4" stroke="#3d5d98" stroke-width="0.7"/><path d="M2.3 4.2 L3.7 5.4 L6 3" fill="none" stroke="#dce8ff" stroke-width="0.9"/></svg>
<div class="a" style="left:39px;top:410.90px;width:41px;height:16.8px;background:#6e6e6e"></div>
<div class="t" style="left:39px;width:41px;text-align:center;top:415.40px;font-size:8.6px;color:#303030;letter-spacing:-0.1px">68</div>
<svg class="a" style="left:2.9px;top:415.80px" width="6.1" height="5.8" viewBox="0 0 6.1 5.8"><rect width="6.1" height="5.8" rx="0.6" fill="#f2f2f2"/><path d="M0.8 2.9 L2.6 1.2 V2.3 H5.3 V3.5 H2.6 V4.6 Z" fill="#111"/></svg>
<svg class="a" style="left:14.8px;top:414.80px" width="7.1" height="8.9" viewBox="0 0 7.1 8.9"><path d="M1.2 4 V2.6 A2.35 2.35 0 0 1 5.9 2.6 V4 Z" fill="#ececec"/><rect x="2.6" y="1.6" width="1.9" height="1.6" rx="0.8" fill="#555"/><rect x="0" y="3.8" width="7.1" height="5.1" rx="0.5" fill="#efefef"/><rect x="3.2" y="5.6" width="0.8" height="1.4" fill="#9a9a9a"/></svg>
<svg class="a" style="left:27.9px;top:414.50px" width="8.2" height="8.8" viewBox="0 0 8.2 8.8"><path d="M0.4 0.6 Q4.1 -0.1 7.8 0.6 V4.6 Q7.8 7 4.1 8.5 Q0.4 7 0.4 4.6 Z" fill="#7ea4e4" stroke="#3d5d98" stroke-width="0.7"/><path d="M2.3 4.2 L3.7 5.4 L6 3" fill="none" stroke="#dce8ff" stroke-width="0.9"/></svg>
<div class="a" style="left:39px;top:428.75px;width:41px;height:16.8px;background:#6e6e6e"></div>
<div class="t" style="left:39px;width:41px;text-align:center;top:433.25px;font-size:8.6px;color:#303030;letter-spacing:-0.1px">69</div>
<svg class="a" style="left:2.9px;top:433.65px" width="6.1" height="5.8" viewBox="0 0 6.1 5.8"><rect width="6.1" height="5.8" rx="0.6" fill="#f2f2f2"/><path d="M0.8 2.9 L2.6 1.2 V2.3 H5.3 V3.5 H2.6 V4.6 Z" fill="#111"/></svg>
<svg class="a" style="left:14.8px;top:432.65px" width="7.1" height="8.9" viewBox="0 0 7.1 8.9"><path d="M1.2 4 V2.6 A2.35 2.35 0 0 1 5.9 2.6 V4 Z" fill="#ececec"/><rect x="2.6" y="1.6" width="1.9" height="1.6" rx="0.8" fill="#555"/><rect x="0" y="3.8" width="7.1" height="5.1" rx="0.5" fill="#efefef"/><rect x="3.2" y="5.6" width="0.8" height="1.4" fill="#9a9a9a"/></svg>
<svg class="a" style="left:27.9px;top:432.35px" width="8.2" height="8.8" viewBox="0 0 8.2 8.8"><path d="M0.4 0.6 Q4.1 -0.1 7.8 0.6 V4.6 Q7.8 7 4.1 8.5 Q0.4 7 0.4 4.6 Z" fill="#7ea4e4" stroke="#3d5d98" stroke-width="0.7"/><path d="M2.3 4.2 L3.7 5.4 L6 3" fill="none" stroke="#dce8ff" stroke-width="0.9"/></svg>
<div class="a" style="left:39px;top:446.60px;width:41px;height:16.8px;background:#6e6e6e"></div>
<div class="t" style="left:39px;width:41px;text-align:center;top:451.10px;font-size:8.6px;color:#303030;letter-spacing:-0.1px">70</div>
<svg class="a" style="left:2.9px;top:451.50px" width="6.1" height="5.8" viewBox="0 0 6.1 5.8"><rect width="6.1" height="5.8" rx="0.6" fill="#f2f2f2"/><path d="M0.8 2.9 L2.6 1.2 V2.3 H5.3 V3.5 H2.6 V4.6 Z" fill="#111"/></svg>
<svg class="a" style="left:14.8px;top:450.50px" width="7.1" height="8.9" viewBox="0 0 7.1 8.9"><path d="M1.2 4 V2.6 A2.35 2.35 0 0 1 5.9 2.6 V4 Z" fill="#ececec"/><rect x="2.6" y="1.6" width="1.9" height="1.6" rx="0.8" fill="#555"/><rect x="0" y="3.8" width="7.1" height="5.1" rx="0.5" fill="#efefef"/><rect x="3.2" y="5.6" width="0.8" height="1.4" fill="#9a9a9a"/></svg>
<svg class="a" style="left:27.9px;top:450.20px" width="8.2" height="8.8" viewBox="0 0 8.2 8.8"><path d="M0.4 0.6 Q4.1 -0.1 7.8 0.6 V4.6 Q7.8 7 4.1 8.5 Q0.4 7 0.4 4.6 Z" fill="#7ea4e4" stroke="#3d5d98" stroke-width="0.7"/><path d="M2.3 4.2 L3.7 5.4 L6 3" fill="none" stroke="#dce8ff" stroke-width="0.9"/></svg>
<div class="a" style="left:39px;top:464.45px;width:41px;height:16.8px;background:#6e6e6e"></div>
<div class="t" style="left:39px;width:41px;text-align:center;top:468.95px;font-size:8.6px;color:#303030;letter-spacing:-0.1px">71</div>
<svg class="a" style="left:2.9px;top:469.35px" width="6.1" height="5.8" viewBox="0 0 6.1 5.8"><rect width="6.1" height="5.8" rx="0.6" fill="#f2f2f2"/><path d="M0.8 2.9 L2.6 1.2 V2.3 H5.3 V3.5 H2.6 V4.6 Z" fill="#111"/></svg>
<svg class="a" style="left:14.8px;top:468.35px" width="7.1" height="8.9" viewBox="0 0 7.1 8.9"><path d="M1.2 4 V2.6 A2.35 2.35 0 0 1 5.9 2.6 V4 Z" fill="#ececec"/><rect x="2.6" y="1.6" width="1.9" height="1.6" rx="0.8" fill="#555"/><rect x="0" y="3.8" width="7.1" height="5.1" rx="0.5" fill="#efefef"/><rect x="3.2" y="5.6" width="0.8" height="1.4" fill="#9a9a9a"/></svg>
<svg class="a" style="left:27.9px;top:468.05px" width="8.2" height="8.8" viewBox="0 0 8.2 8.8"><path d="M0.4 0.6 Q4.1 -0.1 7.8 0.6 V4.6 Q7.8 7 4.1 8.5 Q0.4 7 0.4 4.6 Z" fill="#7ea4e4" stroke="#3d5d98" stroke-width="0.7"/><path d="M2.3 4.2 L3.7 5.4 L6 3" fill="none" stroke="#dce8ff" stroke-width="0.9"/></svg>
<div class="a" style="left:39px;top:482.30px;width:41px;height:16.8px;background:#6e6e6e"></div>
<div class="t" style="left:39px;width:41px;text-align:center;top:486.80px;font-size:8.6px;color:#303030;letter-spacing:-0.1px">72</div>
<svg class="a" style="left:2.9px;top:487.20px" width="6.1" height="5.8" viewBox="0 0 6.1 5.8"><rect width="6.1" height="5.8" rx="0.6" fill="#f2f2f2"/><path d="M0.8 2.9 L2.6 1.2 V2.3 H5.3 V3.5 H2.6 V4.6 Z" fill="#111"/></svg>
<svg class="a" style="left:14.8px;top:486.20px" width="7.1" height="8.9" viewBox="0 0 7.1 8.9"><path d="M1.2 4 V2.6 A2.35 2.35 0 0 1 5.9 2.6 V4 Z" fill="#ececec"/><rect x="2.6" y="1.6" width="1.9" height="1.6" rx="0.8" fill="#555"/><rect x="0" y="3.8" width="7.1" height="5.1" rx="0.5" fill="#efefef"/><rect x="3.2" y="5.6" width="0.8" height="1.4" fill="#9a9a9a"/></svg>
<svg class="a" style="left:27.9px;top:485.90px" width="8.2" height="8.8" viewBox="0 0 8.2 8.8"><path d="M0.4 0.6 Q4.1 -0.1 7.8 0.6 V4.6 Q7.8 7 4.1 8.5 Q0.4 7 0.4 4.6 Z" fill="#7ea4e4" stroke="#3d5d98" stroke-width="0.7"/><path d="M2.3 4.2 L3.7 5.4 L6 3" fill="none" stroke="#dce8ff" stroke-width="0.9"/></svg>
<div class="a" style="left:39px;top:500.15px;width:41px;height:16.8px;background:#6e6e6e"></div>
<div class="t" style="left:39px;width:41px;text-align:center;top:504.65px;font-size:8.6px;color:#303030;letter-spacing:-0.1px">73</div>
<svg class="a" style="left:2.9px;top:505.05px" width="6.1" height="5.8" viewBox="0 0 6.1 5.8"><rect width="6.1" height="5.8" rx="0.6" fill="#f2f2f2"/><path d="M0.8 2.9 L2.6 1.2 V2.3 H5.3 V3.5 H2.6 V4.6 Z" fill="#111"/></svg>
<svg class="a" style="left:14.8px;top:504.05px" width="7.1" height="8.9" viewBox="0 0 7.1 8.9"><path d="M1.2 4 V2.6 A2.35 2.35 0 0 1 5.9 2.6 V4 Z" fill="#ececec"/><rect x="2.6" y="1.6" width="1.9" height="1.6" rx="0.8" fill="#555"/><rect x="0" y="3.8" width="7.1" height="5.1" rx="0.5" fill="#efefef"/><rect x="3.2" y="5.6" width="0.8" height="1.4" fill="#9a9a9a"/></svg>
<svg class="a" style="left:27.9px;top:503.75px" width="8.2" height="8.8" viewBox="0 0 8.2 8.8"><path d="M0.4 0.6 Q4.1 -0.1 7.8 0.6 V4.6 Q7.8 7 4.1 8.5 Q0.4 7 0.4 4.6 Z" fill="#7ea4e4" stroke="#3d5d98" stroke-width="0.7"/><path d="M2.3 4.2 L3.7 5.4 L6 3" fill="none" stroke="#dce8ff" stroke-width="0.9"/></svg>
<div class="a" style="left:39px;top:518.00px;width:41px;height:16.8px;background:#6e6e6e"></div>
<div class="t" style="left:39px;width:41px;text-align:center;top:522.50px;font-size:8.6px;color:#303030;letter-spacing:-0.1px">74</div>
<svg class="a" style="left:2.9px;top:522.90px" width="6.1" height="5.8" viewBox="0 0 6.1 5.8"><rect width="6.1" height="5.8" rx="0.6" fill="#f2f2f2"/><path d="M0.8 2.9 L2.6 1.2 V2.3 H5.3 V3.5 H2.6 V4.6 Z" fill="#111"/></svg>
<svg class="a" style="left:14.8px;top:521.90px" width="7.1" height="8.9" viewBox="0 0 7.1 8.9"><path d="M1.2 4 V2.6 A2.35 2.35 0 0 1 5.9 2.6 V4 Z" fill="#ececec"/><rect x="2.6" y="1.6" width="1.9" height="1.6" rx="0.8" fill="#555"/><rect x="0" y="3.8" width="7.1" height="5.1" rx="0.5" fill="#efefef"/><rect x="3.2" y="5.6" width="0.8" height="1.4" fill="#9a9a9a"/></svg>
<svg class="a" style="left:27.9px;top:521.60px" width="8.2" height="8.8" viewBox="0 0 8.2 8.8"><path d="M0.4 0.6 Q4.1 -0.1 7.8 0.6 V4.6 Q7.8 7 4.1 8.5 Q0.4 7 0.4 4.6 Z" fill="#7ea4e4" stroke="#3d5d98" stroke-width="0.7"/><path d="M2.3 4.2 L3.7 5.4 L6 3" fill="none" stroke="#dce8ff" stroke-width="0.9"/></svg>
<div class="a" style="left:39px;top:535.85px;width:41px;height:16.8px;background:#6e6e6e"></div>
<div class="t" style="left:39px;width:41px;text-align:center;top:540.35px;font-size:8.6px;color:#303030;letter-spacing:-0.1px">75</div>
<svg class="a" style="left:2.9px;top:540.75px" width="6.1" height="5.8" viewBox="0 0 6.1 5.8"><rect width="6.1" height="5.8" rx="0.6" fill="#f2f2f2"/><path d="M0.8 2.9 L2.6 1.2 V2.3 H5.3 V3.5 H2.6 V4.6 Z" fill="#111"/></svg>
<svg class="a" style="left:14.8px;top:539.75px" width="7.1" height="8.9" viewBox="0 0 7.1 8.9"><path d="M1.2 4 V2.6 A2.35 2.35 0 0 1 5.9 2.6 V4 Z" fill="#ececec"/><rect x="2.6" y="1.6" width="1.9" height="1.6" rx="0.8" fill="#555"/><rect x="0" y="3.8" width="7.1" height="5.1" rx="0.5" fill="#efefef"/><rect x="3.2" y="5.6" width="0.8" height="1.4" fill="#9a9a9a"/></svg>
<svg class="a" style="left:27.9px;top:539.45px" width="8.2" height="8.8" viewBox="0 0 8.2 8.8"><path d="M0.4 0.6 Q4.1 -0.1 7.8 0.6 V4.6 Q7.8 7 4.1 8.5 Q0.4 7 0.4 4.6 Z" fill="#7ea4e4" stroke="#3d5d98" stroke-width="0.7"/><path d="M2.3 4.2 L3.7 5.4 L6 3" fill="none" stroke="#dce8ff" stroke-width="0.9"/></svg>
<div class="a" style="left:39px;top:553.70px;width:41px;height:16.8px;background:#6e6e6e"></div>
<div class="t" style="left:39px;width:41px;text-align:center;top:558.20px;font-size:8.6px;color:#303030;letter-spacing:-0.1px">76</div>
<svg class="a" style="left:2.9px;top:558.60px" width="6.1" height="5.8" viewBox="0 0 6.1 5.8"><rect width="6.1" height="5.8" rx="0.6" fill="#f2f2f2"/><path d="M0.8 2.9 L2.6 1.2 V2.3 H5.3 V3.5 H2.6 V4.6 Z" fill="#111"/></svg>
<svg class="a" style="left:14.8px;top:557.60px" width="7.1" height="8.9" viewBox="0 0 7.1 8.9"><path d="M1.2 4 V2.6 A2.35 2.35 0 0 1 5.9 2.6 V4 Z" fill="#ececec"/><rect x="2.6" y="1.6" width="1.9" height="1.6" rx="0.8" fill="#555"/><rect x="0" y="3.8" width="7.1" height="5.1" rx="0.5" fill="#efefef"/><rect x="3.2" y="5.6" width="0.8" height="1.4" fill="#9a9a9a"/></svg>
<svg class="a" style="left:27.9px;top:557.30px" width="8.2" height="8.8" viewBox="0 0 8.2 8.8"><path d="M0.4 0.6 Q4.1 -0.1 7.8 0.6 V4.6 Q7.8 7 4.1 8.5 Q0.4 7 0.4 4.6 Z" fill="#7ea4e4" stroke="#3d5d98" stroke-width="0.7"/><path d="M2.3 4.2 L3.7 5.4 L6 3" fill="none" stroke="#dce8ff" stroke-width="0.9"/></svg>
<div class="a" style="left:39px;top:571.55px;width:41px;height:16.8px;background:#6e6e6e"></div>
<div class="t" style="left:39px;width:41px;text-align:center;top:576.05px;font-size:8.6px;color:#303030;letter-spacing:-0.1px">77</div>
<svg class="a" style="left:2.9px;top:576.45px" width="6.1" height="5.8" viewBox="0 0 6.1 5.8"><rect width="6.1" height="5.8" rx="0.6" fill="#f2f2f2"/><path d="M0.8 2.9 L2.6 1.2 V2.3 H5.3 V3.5 H2.6 V4.6 Z" fill="#111"/></svg>
<svg class="a" style="left:14.8px;top:575.45px" width="7.1" height="8.9" viewBox="0 0 7.1 8.9"><path d="M1.2 4 V2.6 A2.35 2.35 0 0 1 5.9 2.6 V4 Z" fill="#ececec"/><rect x="2.6" y="1.6" width="1.9" height="1.6" rx="0.8" fill="#555"/><rect x="0" y="3.8" width="7.1" height="5.1" rx="0.5" fill="#efefef"/><rect x="3.2" y="5.6" width="0.8" height="1.4" fill="#9a9a9a"/></svg>
<svg class="a" style="left:27.9px;top:575.15px" width="8.2" height="8.8" viewBox="0 0 8.2 8.8"><path d="M0.4 0.6 Q4.1 -0.1 7.8 0.6 V4.6 Q7.8 7 4.1 8.5 Q0.4 7 0.4 4.6 Z" fill="#7ea4e4" stroke="#3d5d98" stroke-width="0.7"/><path d="M2.3 4.2 L3.7 5.4 L6 3" fill="none" stroke="#dce8ff" stroke-width="0.9"/></svg>
<div class="a" style="left:39px;top:589.40px;width:41px;height:16.8px;background:#6e6e6e"></div>
<div class="t" style="left:39px;width:41px;text-align:center;top:593.90px;font-size:8.6px;color:#303030;letter-spacing:-0.1px">78</div>
<svg class="a" style="left:2.9px;top:594.30px" width="6.1" height="5.8" viewBox="0 0 6.1 5.8"><rect width="6.1" height="5.8" rx="0.6" fill="#f2f2f2"/><path d="M0.8 2.9 L2.6 1.2 V2.3 H5.3 V3.5 H2.6 V4.6 Z" fill="#111"/></svg>
<svg class="a" style="left:14.8px;top:593.30px" width="7.1" height="8.9" viewBox="0 0 7.1 8.9"><path d="M1.2 4 V2.6 A2.35 2.35 0 0 1 5.9 2.6 V4 Z" fill="#ececec"/><rect x="2.6" y="1.6" width="1.9" height="1.6" rx="0.8" fill="#555"/><rect x="0" y="3.8" width="7.1" height="5.1" rx="0.5" fill="#efefef"/><rect x="3.2" y="5.6" width="0.8" height="1.4" fill="#9a9a9a"/></svg>
<svg class="a" style="left:27.9px;top:593.00px" width="8.2" height="8.8" viewBox="0 0 8.2 8.8"><path d="M0.4 0.6 Q4.1 -0.1 7.8 0.6 V4.6 Q7.8 7 4.1 8.5 Q0.4 7 0.4 4.6 Z" fill="#7ea4e4" stroke="#3d5d98" stroke-width="0.7"/><path d="M2.3 4.2 L3.7 5.4 L6 3" fill="none" stroke="#dce8ff" stroke-width="0.9"/></svg>
<div class="a" style="left:39px;top:607.25px;width:41px;height:16.8px;background:#6e6e6e"></div>
<div class="t" style="left:39px;width:41px;text-align:center;top:611.75px;font-size:8.6px;color:#303030;letter-spacing:-0.1px">79</div>
<svg class="a" style="left:2.9px;top:612.15px" width="6.1" height="5.8" viewBox="0 0 6.1 5.8"><rect width="6.1" height="5.8" rx="0.6" fill="#f2f2f2"/><path d="M0.8 2.9 L2.6 1.2 V2.3 H5.3 V3.5 H2.6 V4.6 Z" fill="#111"/></svg>
<svg class="a" style="left:14.8px;top:611.15px" width="7.1" height="8.9" viewBox="0 0 7.1 8.9"><path d="M1.2 4 V2.6 A2.35 2.35 0 0 1 5.9 2.6 V4 Z" fill="#ececec"/><rect x="2.6" y="1.6" width="1.9" height="1.6" rx="0.8" fill="#555"/><rect x="0" y="3.8" width="7.1" height="5.1" rx="0.5" fill="#efefef"/><rect x="3.2" y="5.6" width="0.8" height="1.4" fill="#9a9a9a"/></svg>
<svg class="a" style="left:27.9px;top:610.85px" width="8.2" height="8.8" viewBox="0 0 8.2 8.8"><path d="M0.4 0.6 Q4.1 -0.1 7.8 0.6 V4.6 Q7.8 7 4.1 8.5 Q0.4 7 0.4 4.6 Z" fill="#7ea4e4" stroke="#3d5d98" stroke-width="0.7"/><path d="M2.3 4.2 L3.7 5.4 L6 3" fill="none" stroke="#dce8ff" stroke-width="0.9"/></svg>
<div class="a" style="left:131.50px;top:124.3px;width:1px;height:494px;background:#222222"></div>
<div class="a" style="left:321.80px;top:124.3px;width:1px;height:494px;background:#222222"></div>
<div class="a" style="left:352.80px;top:124.3px;width:1px;height:494px;background:#222222"></div>
<div class="a" style="left:436.50px;top:124.3px;width:1px;height:494px;background:#222222"></div>
<div class="a" style="left:520.00px;top:124.3px;width:1px;height:494px;background:#222222"></div>
<div class="a" style="left:603.80px;top:124.3px;width:1px;height:494px;background:#222222"></div>
<div class="a" style="left:687.40px;top:124.3px;width:1px;height:494px;background:#222222"></div>
<div class="a" style="left:771.00px;top:124.3px;width:1px;height:494px;background:#222222"></div>
<div class="a" style="left:854.50px;top:124.3px;width:1px;height:494px;background:#222222"></div>
<div class="a" style="left:938.10px;top:124.3px;width:1px;height:494px;background:#222222"></div>
<div class="a" style="left:1021.30px;top:124.3px;width:1px;height:494px;background:#222222"></div>
<div class="a" style="left:0;top:123.8px;width:1023px;height:0.8px;background:#4a4a4a"></div>
</body></html>
